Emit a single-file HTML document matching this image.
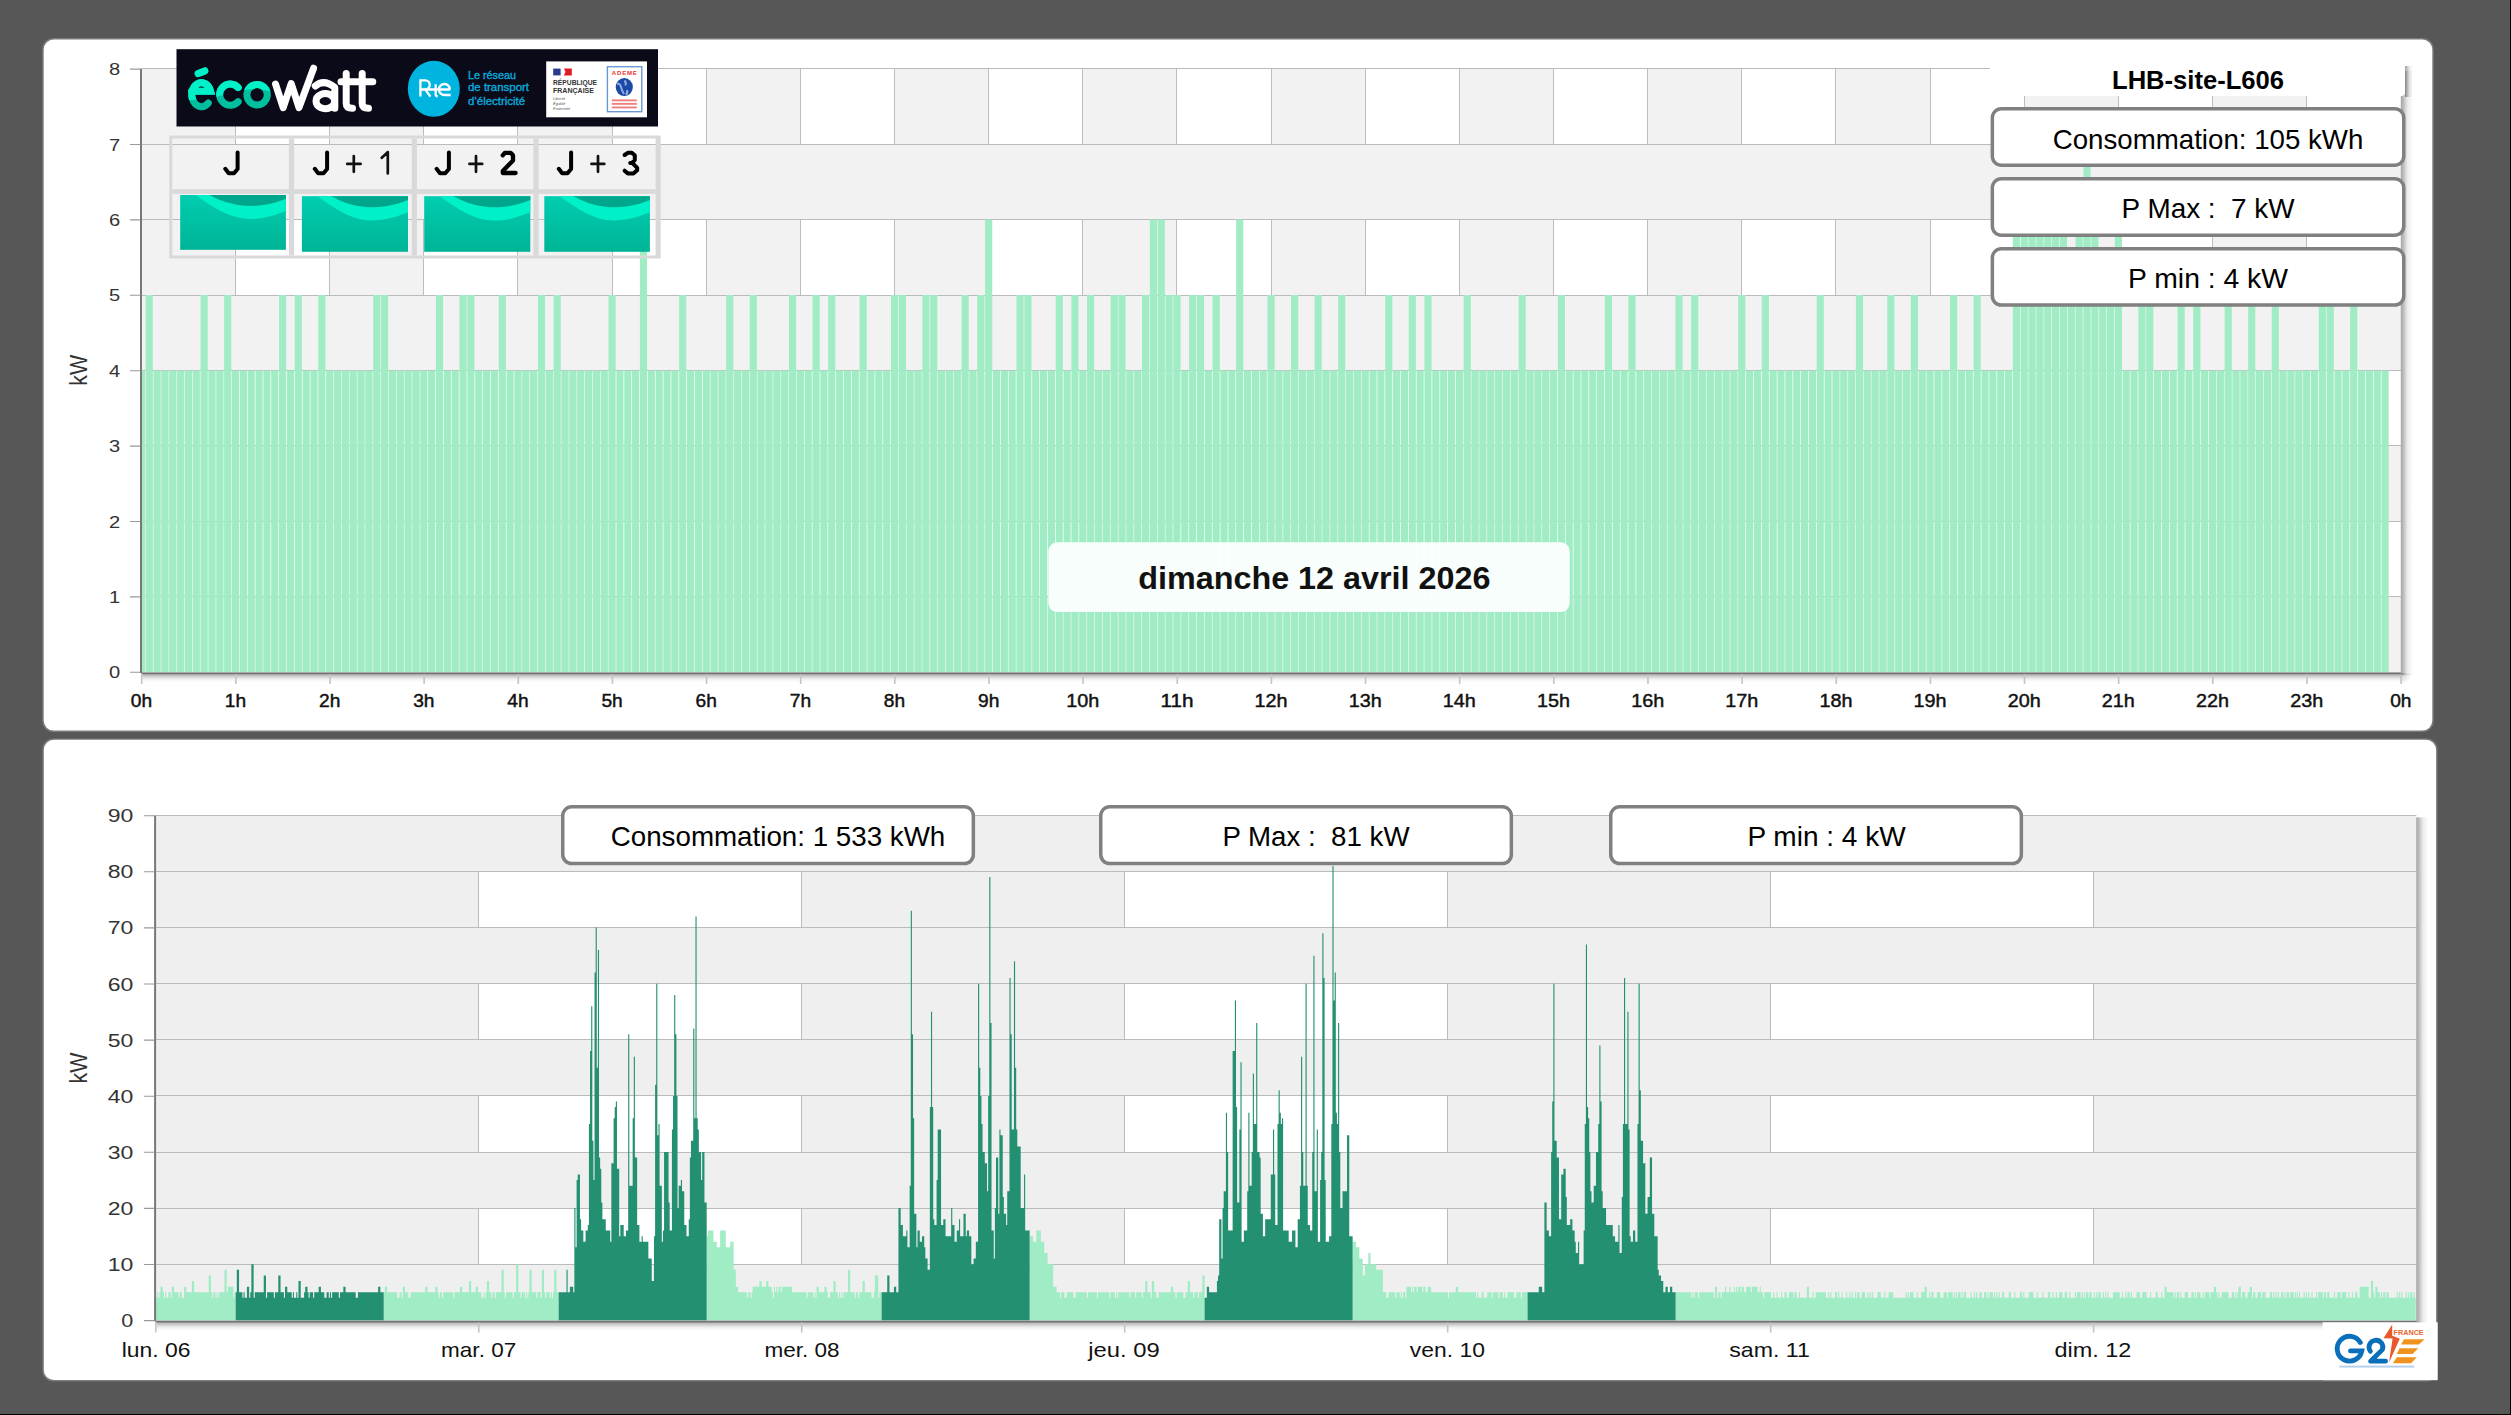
<!DOCTYPE html><html><head><meta charset="utf-8"><style>html,body{margin:0;padding:0;background:#575757;overflow:hidden}svg{display:block}text{font-family:"Liberation Sans",sans-serif;white-space:pre}</style></head><body><svg width="2511" height="1415" viewBox="0 0 2511 1415"><defs><linearGradient id="eg" x1="0" y1="0" x2="0" y2="1"><stop offset="0" stop-color="#00cdb0"/><stop offset="1" stop-color="#00b496"/></linearGradient><linearGradient id="shR" x1="0" y1="0" x2="1" y2="0"><stop offset="0" stop-opacity="0.36"/><stop offset="0.22" stop-opacity="0.26"/><stop offset="0.55" stop-opacity="0.08"/><stop offset="1" stop-opacity="0"/></linearGradient><linearGradient id="shB" x1="0" y1="0" x2="0" y2="1"><stop offset="0" stop-opacity="0.34"/><stop offset="0.3" stop-opacity="0.2"/><stop offset="0.65" stop-opacity="0.05"/><stop offset="1" stop-opacity="0"/></linearGradient><radialGradient id="shC" cx="0" cy="0" r="1"><stop offset="0" stop-opacity="0.3"/><stop offset="0.5" stop-opacity="0.08"/><stop offset="1" stop-opacity="0"/></radialGradient><linearGradient id="ecoG" gradientUnits="userSpaceOnUse" x1="0" y1="70" x2="0" y2="111"><stop offset="0.55" stop-color="#00eec8"/><stop offset="0.56" stop-color="#00bc9c"/></linearGradient><filter id="sh" x="-5%" y="-5%" width="115%" height="130%"><feGaussianBlur stdDeviation="2"/></filter></defs><rect x="0" y="0" width="2511" height="1415" fill="#575757"/><rect x="2510" y="0" width="1" height="1415" fill="#000"/><rect x="0" y="1414" width="2511" height="1" fill="#000"/><rect x="42.3" y="38.1" width="2391.4" height="693.9" rx="11" fill="#7a7a7a"/><rect x="42.4" y="738.4" width="2395.1" height="643" rx="11" fill="#7a7a7a"/><rect x="43.7" y="39.5" width="2388.6" height="691.1" rx="10" fill="#fff"/><rect x="43.8" y="739.8" width="2392.3" height="640.2" rx="10" fill="#fff"/><rect x="141.40" y="68.80" width="2259.40" height="603.20" fill="#fff"/><rect x="141.40" y="68.80" width="94.14" height="603.20" fill="#f2f2f2"/><rect x="329.68" y="68.80" width="94.14" height="603.20" fill="#f2f2f2"/><rect x="517.97" y="68.80" width="94.14" height="603.20" fill="#f2f2f2"/><rect x="706.25" y="68.80" width="94.14" height="603.20" fill="#f2f2f2"/><rect x="894.53" y="68.80" width="94.14" height="603.20" fill="#f2f2f2"/><rect x="1082.82" y="68.80" width="94.14" height="603.20" fill="#f2f2f2"/><rect x="1271.10" y="68.80" width="94.14" height="603.20" fill="#f2f2f2"/><rect x="1459.38" y="68.80" width="94.14" height="603.20" fill="#f2f2f2"/><rect x="1647.67" y="68.80" width="94.14" height="603.20" fill="#f2f2f2"/><rect x="1835.95" y="68.80" width="94.14" height="603.20" fill="#f2f2f2"/><rect x="2024.23" y="68.80" width="94.14" height="603.20" fill="#f2f2f2"/><rect x="2212.52" y="68.80" width="94.14" height="603.20" fill="#f2f2f2"/><line x1="235.50" y1="68.80" x2="235.50" y2="672.00" stroke="#bdbdbd" stroke-width="1"/><line x1="329.50" y1="68.80" x2="329.50" y2="672.00" stroke="#bdbdbd" stroke-width="1"/><line x1="423.50" y1="68.80" x2="423.50" y2="672.00" stroke="#bdbdbd" stroke-width="1"/><line x1="517.50" y1="68.80" x2="517.50" y2="672.00" stroke="#bdbdbd" stroke-width="1"/><line x1="612.50" y1="68.80" x2="612.50" y2="672.00" stroke="#bdbdbd" stroke-width="1"/><line x1="706.50" y1="68.80" x2="706.50" y2="672.00" stroke="#bdbdbd" stroke-width="1"/><line x1="800.50" y1="68.80" x2="800.50" y2="672.00" stroke="#bdbdbd" stroke-width="1"/><line x1="894.50" y1="68.80" x2="894.50" y2="672.00" stroke="#bdbdbd" stroke-width="1"/><line x1="988.50" y1="68.80" x2="988.50" y2="672.00" stroke="#bdbdbd" stroke-width="1"/><line x1="1082.50" y1="68.80" x2="1082.50" y2="672.00" stroke="#bdbdbd" stroke-width="1"/><line x1="1176.50" y1="68.80" x2="1176.50" y2="672.00" stroke="#bdbdbd" stroke-width="1"/><line x1="1271.50" y1="68.80" x2="1271.50" y2="672.00" stroke="#bdbdbd" stroke-width="1"/><line x1="1365.50" y1="68.80" x2="1365.50" y2="672.00" stroke="#bdbdbd" stroke-width="1"/><line x1="1459.50" y1="68.80" x2="1459.50" y2="672.00" stroke="#bdbdbd" stroke-width="1"/><line x1="1553.50" y1="68.80" x2="1553.50" y2="672.00" stroke="#bdbdbd" stroke-width="1"/><line x1="1647.50" y1="68.80" x2="1647.50" y2="672.00" stroke="#bdbdbd" stroke-width="1"/><line x1="1741.50" y1="68.80" x2="1741.50" y2="672.00" stroke="#bdbdbd" stroke-width="1"/><line x1="1835.50" y1="68.80" x2="1835.50" y2="672.00" stroke="#bdbdbd" stroke-width="1"/><line x1="1930.50" y1="68.80" x2="1930.50" y2="672.00" stroke="#bdbdbd" stroke-width="1"/><line x1="2024.50" y1="68.80" x2="2024.50" y2="672.00" stroke="#bdbdbd" stroke-width="1"/><line x1="2118.50" y1="68.80" x2="2118.50" y2="672.00" stroke="#bdbdbd" stroke-width="1"/><line x1="2212.50" y1="68.80" x2="2212.50" y2="672.00" stroke="#bdbdbd" stroke-width="1"/><line x1="2306.50" y1="68.80" x2="2306.50" y2="672.00" stroke="#bdbdbd" stroke-width="1"/><rect x="141.40" y="144.20" width="2259.40" height="75.40" fill="#f2f2f2"/><rect x="141.40" y="295.00" width="2259.40" height="75.40" fill="#f2f2f2"/><rect x="141.40" y="445.80" width="2259.40" height="75.40" fill="#f2f2f2"/><rect x="141.40" y="596.60" width="2259.40" height="75.40" fill="#f2f2f2"/><line x1="141.40" y1="672.50" x2="2400.80" y2="672.50" stroke="#bbb" stroke-width="1"/><line x1="141.40" y1="596.50" x2="2400.80" y2="596.50" stroke="#bbb" stroke-width="1"/><line x1="141.40" y1="521.50" x2="2400.80" y2="521.50" stroke="#bbb" stroke-width="1"/><line x1="141.40" y1="445.50" x2="2400.80" y2="445.50" stroke="#bbb" stroke-width="1"/><line x1="141.40" y1="370.50" x2="2400.80" y2="370.50" stroke="#bbb" stroke-width="1"/><line x1="141.40" y1="295.50" x2="2400.80" y2="295.50" stroke="#bbb" stroke-width="1"/><line x1="141.40" y1="219.50" x2="2400.80" y2="219.50" stroke="#bbb" stroke-width="1"/><line x1="141.40" y1="144.50" x2="2400.80" y2="144.50" stroke="#bbb" stroke-width="1"/><line x1="141.40" y1="68.50" x2="2400.80" y2="68.50" stroke="#bbb" stroke-width="1"/><rect x="2400.80" y="70.80" width="12" height="604.20" fill="url(#shR)"/><rect x="142.40" y="673.50" width="2259.40" height="9" fill="url(#shB)"/><radialGradient id="shC141" gradientUnits="userSpaceOnUse" cx="2400.80" cy="673.50" r="11"><stop offset="0" stop-opacity="0.32"/><stop offset="0.35" stop-opacity="0.14"/><stop offset="1" stop-opacity="0"/></radialGradient><rect x="2400.80" y="673.50" width="12" height="10" fill="url(#shC141)"/><path d="M141.40 370.40H144.97V672.00H141.40ZM145.67 295.00H152.82V672.00H145.67ZM153.52 370.40H160.66V672.00H153.52ZM161.36 370.40H168.51V672.00H161.36ZM169.21 370.40H176.35V672.00H169.21ZM177.05 370.40H184.20V672.00H177.05ZM184.90 370.40H192.04V672.00H184.90ZM192.74 370.40H199.89V672.00H192.74ZM200.59 295.00H207.73V672.00H200.59ZM208.43 370.40H215.58V672.00H208.43ZM216.28 370.40H223.42V672.00H216.28ZM224.12 295.00H231.27V672.00H224.12ZM231.97 370.40H239.11V672.00H231.97ZM239.81 370.40H246.96V672.00H239.81ZM247.66 370.40H254.80V672.00H247.66ZM255.50 370.40H262.65V672.00H255.50ZM263.35 370.40H270.49V672.00H263.35ZM271.19 370.40H278.34V672.00H271.19ZM279.04 295.00H286.19V672.00H279.04ZM286.89 370.40H294.03V672.00H286.89ZM294.73 295.00H301.88V672.00H294.73ZM302.58 370.40H309.72V672.00H302.58ZM310.42 370.40H317.57V672.00H310.42ZM318.27 295.00H325.41V672.00H318.27ZM326.11 370.40H333.26V672.00H326.11ZM333.96 370.40H341.10V672.00H333.96ZM341.80 370.40H348.95V672.00H341.80ZM349.65 370.40H356.79V672.00H349.65ZM357.49 370.40H364.64V672.00H357.49ZM365.34 370.40H372.48V672.00H365.34ZM373.18 295.00H380.33V672.00H373.18ZM381.03 295.00H388.17V672.00H381.03ZM388.87 370.40H396.02V672.00H388.87ZM396.72 370.40H403.86V672.00H396.72ZM404.56 370.40H411.71V672.00H404.56ZM412.41 370.40H419.55V672.00H412.41ZM420.25 370.40H427.40V672.00H420.25ZM428.10 370.40H435.24V672.00H428.10ZM435.94 295.00H443.09V672.00H435.94ZM443.79 370.40H450.93V672.00H443.79ZM451.63 370.40H458.78V672.00H451.63ZM459.48 295.00H466.62V672.00H459.48ZM467.32 295.00H474.47V672.00H467.32ZM475.17 370.40H482.31V672.00H475.17ZM483.01 370.40H490.16V672.00H483.01ZM490.86 370.40H498.00V672.00H490.86ZM498.70 295.00H505.85V672.00H498.70ZM506.55 370.40H513.69V672.00H506.55ZM514.39 370.40H521.54V672.00H514.39ZM522.24 370.40H529.38V672.00H522.24ZM530.08 370.40H537.23V672.00H530.08ZM537.93 295.00H545.07V672.00H537.93ZM545.77 370.40H552.92V672.00H545.77ZM553.62 295.00H560.76V672.00H553.62ZM561.46 370.40H568.61V672.00H561.46ZM569.31 370.40H576.46V672.00H569.31ZM577.16 370.40H584.30V672.00H577.16ZM585.00 370.40H592.15V672.00H585.00ZM592.85 370.40H599.99V672.00H592.85ZM600.69 370.40H607.84V672.00H600.69ZM608.54 295.00H615.68V672.00H608.54ZM616.38 370.40H623.53V672.00H616.38ZM624.23 370.40H631.37V672.00H624.23ZM632.07 370.40H639.22V672.00H632.07ZM639.92 219.60H647.06V672.00H639.92ZM647.76 370.40H654.91V672.00H647.76ZM655.61 370.40H662.75V672.00H655.61ZM663.45 370.40H670.60V672.00H663.45ZM671.30 370.40H678.44V672.00H671.30ZM679.14 295.00H686.29V672.00H679.14ZM686.99 370.40H694.13V672.00H686.99ZM694.83 370.40H701.98V672.00H694.83ZM702.68 370.40H709.82V672.00H702.68ZM710.52 370.40H717.67V672.00H710.52ZM718.37 370.40H725.51V672.00H718.37ZM726.21 295.00H733.36V672.00H726.21ZM734.06 370.40H741.20V672.00H734.06ZM741.90 370.40H749.05V672.00H741.90ZM749.75 295.00H756.89V672.00H749.75ZM757.59 370.40H764.74V672.00H757.59ZM765.44 370.40H772.58V672.00H765.44ZM773.28 370.40H780.43V672.00H773.28ZM781.13 370.40H788.27V672.00H781.13ZM788.97 295.00H796.12V672.00H788.97ZM796.82 370.40H803.96V672.00H796.82ZM804.66 370.40H811.81V672.00H804.66ZM812.51 295.00H819.65V672.00H812.51ZM820.35 370.40H827.50V672.00H820.35ZM828.20 295.00H835.34V672.00H828.20ZM836.04 370.40H843.19V672.00H836.04ZM843.89 370.40H851.04V672.00H843.89ZM851.74 370.40H858.88V672.00H851.74ZM859.58 295.00H866.73V672.00H859.58ZM867.43 370.40H874.57V672.00H867.43ZM875.27 370.40H882.42V672.00H875.27ZM883.12 370.40H890.26V672.00H883.12ZM890.96 295.00H898.11V672.00H890.96ZM898.81 295.00H905.95V672.00H898.81ZM906.65 370.40H913.80V672.00H906.65ZM914.50 370.40H921.64V672.00H914.50ZM922.34 295.00H929.49V672.00H922.34ZM930.19 295.00H937.33V672.00H930.19ZM938.03 370.40H945.18V672.00H938.03ZM945.88 370.40H953.02V672.00H945.88ZM953.72 370.40H960.87V672.00H953.72ZM961.57 295.00H968.71V672.00H961.57ZM969.41 370.40H976.56V672.00H969.41ZM977.26 295.00H984.40V672.00H977.26ZM985.10 219.60H992.25V672.00H985.10ZM992.95 370.40H1000.09V672.00H992.95ZM1000.79 370.40H1007.94V672.00H1000.79ZM1008.64 370.40H1015.78V672.00H1008.64ZM1016.48 295.00H1023.63V672.00H1016.48ZM1024.33 295.00H1031.47V672.00H1024.33ZM1032.17 370.40H1039.32V672.00H1032.17ZM1040.02 370.40H1047.16V672.00H1040.02ZM1047.86 370.40H1055.01V672.00H1047.86ZM1055.71 295.00H1062.85V672.00H1055.71ZM1063.55 370.40H1070.70V672.00H1063.55ZM1071.40 295.00H1078.54V672.00H1071.40ZM1079.24 370.40H1086.39V672.00H1079.24ZM1087.09 295.00H1094.23V672.00H1087.09ZM1094.93 370.40H1102.08V672.00H1094.93ZM1102.78 370.40H1109.92V672.00H1102.78ZM1110.62 295.00H1117.77V672.00H1110.62ZM1118.47 295.00H1125.61V672.00H1118.47ZM1126.31 370.40H1133.46V672.00H1126.31ZM1134.16 370.40H1141.31V672.00H1134.16ZM1142.01 295.00H1149.15V672.00H1142.01ZM1149.85 219.60H1157.00V672.00H1149.85ZM1157.70 219.60H1164.84V672.00H1157.70ZM1165.54 295.00H1172.69V672.00H1165.54ZM1173.39 295.00H1180.53V672.00H1173.39ZM1181.23 370.40H1188.38V672.00H1181.23ZM1189.08 295.00H1196.22V672.00H1189.08ZM1196.92 295.00H1204.07V672.00H1196.92ZM1204.77 370.40H1211.91V672.00H1204.77ZM1212.61 295.00H1219.76V672.00H1212.61ZM1220.46 370.40H1227.60V672.00H1220.46ZM1228.30 370.40H1235.45V672.00H1228.30ZM1236.15 219.60H1243.29V672.00H1236.15ZM1243.99 370.40H1251.14V672.00H1243.99ZM1251.84 370.40H1258.98V672.00H1251.84ZM1259.68 370.40H1266.83V672.00H1259.68ZM1267.53 295.00H1274.67V672.00H1267.53ZM1275.37 370.40H1282.52V672.00H1275.37ZM1283.22 370.40H1290.36V672.00H1283.22ZM1291.06 295.00H1298.21V672.00H1291.06ZM1298.91 370.40H1306.05V672.00H1298.91ZM1306.75 370.40H1313.90V672.00H1306.75ZM1314.60 295.00H1321.74V672.00H1314.60ZM1322.44 370.40H1329.59V672.00H1322.44ZM1330.29 370.40H1337.43V672.00H1330.29ZM1338.13 295.00H1345.28V672.00H1338.13ZM1345.98 370.40H1353.12V672.00H1345.98ZM1353.82 370.40H1360.97V672.00H1353.82ZM1361.67 370.40H1368.81V672.00H1361.67ZM1369.51 370.40H1376.66V672.00H1369.51ZM1377.36 370.40H1384.50V672.00H1377.36ZM1385.20 295.00H1392.35V672.00H1385.20ZM1393.05 370.40H1400.19V672.00H1393.05ZM1400.89 370.40H1408.04V672.00H1400.89ZM1408.74 295.00H1415.89V672.00H1408.74ZM1416.59 370.40H1423.73V672.00H1416.59ZM1424.43 295.00H1431.58V672.00H1424.43ZM1432.28 370.40H1439.42V672.00H1432.28ZM1440.12 370.40H1447.27V672.00H1440.12ZM1447.97 370.40H1455.11V672.00H1447.97ZM1455.81 370.40H1462.96V672.00H1455.81ZM1463.66 295.00H1470.80V672.00H1463.66ZM1471.50 370.40H1478.65V672.00H1471.50ZM1479.35 370.40H1486.49V672.00H1479.35ZM1487.19 370.40H1494.34V672.00H1487.19ZM1495.04 370.40H1502.18V672.00H1495.04ZM1502.88 370.40H1510.03V672.00H1502.88ZM1510.73 370.40H1517.87V672.00H1510.73ZM1518.57 295.00H1525.72V672.00H1518.57ZM1526.42 370.40H1533.56V672.00H1526.42ZM1534.26 370.40H1541.41V672.00H1534.26ZM1542.11 370.40H1549.25V672.00H1542.11ZM1549.95 370.40H1557.10V672.00H1549.95ZM1557.80 295.00H1564.94V672.00H1557.80ZM1565.64 370.40H1572.79V672.00H1565.64ZM1573.49 370.40H1580.63V672.00H1573.49ZM1581.33 370.40H1588.48V672.00H1581.33ZM1589.18 370.40H1596.32V672.00H1589.18ZM1597.02 370.40H1604.17V672.00H1597.02ZM1604.87 295.00H1612.01V672.00H1604.87ZM1612.71 370.40H1619.86V672.00H1612.71ZM1620.56 370.40H1627.70V672.00H1620.56ZM1628.40 295.00H1635.55V672.00H1628.40ZM1636.25 370.40H1643.39V672.00H1636.25ZM1644.09 370.40H1651.24V672.00H1644.09ZM1651.94 370.40H1659.08V672.00H1651.94ZM1659.78 370.40H1666.93V672.00H1659.78ZM1667.63 370.40H1674.77V672.00H1667.63ZM1675.47 295.00H1682.62V672.00H1675.47ZM1683.32 370.40H1690.46V672.00H1683.32ZM1691.16 295.00H1698.31V672.00H1691.16ZM1699.01 370.40H1706.16V672.00H1699.01ZM1706.86 370.40H1714.00V672.00H1706.86ZM1714.70 370.40H1721.85V672.00H1714.70ZM1722.55 370.40H1729.69V672.00H1722.55ZM1730.39 370.40H1737.54V672.00H1730.39ZM1738.24 295.00H1745.38V672.00H1738.24ZM1746.08 370.40H1753.23V672.00H1746.08ZM1753.93 370.40H1761.07V672.00H1753.93ZM1761.77 295.00H1768.92V672.00H1761.77ZM1769.62 370.40H1776.76V672.00H1769.62ZM1777.46 370.40H1784.61V672.00H1777.46ZM1785.31 370.40H1792.45V672.00H1785.31ZM1793.15 370.40H1800.30V672.00H1793.15ZM1801.00 370.40H1808.14V672.00H1801.00ZM1808.84 370.40H1815.99V672.00H1808.84ZM1816.69 295.00H1823.83V672.00H1816.69ZM1824.53 370.40H1831.68V672.00H1824.53ZM1832.38 370.40H1839.52V672.00H1832.38ZM1840.22 370.40H1847.37V672.00H1840.22ZM1848.07 370.40H1855.21V672.00H1848.07ZM1855.91 295.00H1863.06V672.00H1855.91ZM1863.76 370.40H1870.90V672.00H1863.76ZM1871.60 370.40H1878.75V672.00H1871.60ZM1879.45 370.40H1886.59V672.00H1879.45ZM1887.29 295.00H1894.44V672.00H1887.29ZM1895.14 370.40H1902.28V672.00H1895.14ZM1902.98 370.40H1910.13V672.00H1902.98ZM1910.83 295.00H1917.97V672.00H1910.83ZM1918.67 370.40H1925.82V672.00H1918.67ZM1926.52 370.40H1933.66V672.00H1926.52ZM1934.36 370.40H1941.51V672.00H1934.36ZM1942.21 370.40H1949.35V672.00H1942.21ZM1950.05 295.00H1957.20V672.00H1950.05ZM1957.90 370.40H1965.04V672.00H1957.90ZM1965.74 370.40H1972.89V672.00H1965.74ZM1973.59 295.00H1980.74V672.00H1973.59ZM1981.44 370.40H1988.58V672.00H1981.44ZM1989.28 370.40H1996.43V672.00H1989.28ZM1997.13 370.40H2004.27V672.00H1997.13ZM2004.97 370.40H2012.12V672.00H2004.97ZM2012.82 219.60H2019.96V672.00H2012.82ZM2020.66 219.60H2027.81V672.00H2020.66ZM2028.51 219.60H2035.65V672.00H2028.51ZM2036.35 219.60H2043.50V672.00H2036.35ZM2044.20 219.60H2051.34V672.00H2044.20ZM2052.04 219.60H2059.19V672.00H2052.04ZM2059.89 219.60H2067.03V672.00H2059.89ZM2067.73 295.00H2074.88V672.00H2067.73ZM2075.58 219.60H2082.72V672.00H2075.58ZM2083.42 144.20H2090.57V672.00H2083.42ZM2091.27 219.60H2098.41V672.00H2091.27ZM2099.11 295.00H2106.26V672.00H2099.11ZM2106.96 295.00H2114.10V672.00H2106.96ZM2114.80 219.60H2121.95V672.00H2114.80ZM2122.65 370.40H2129.79V672.00H2122.65ZM2130.49 370.40H2137.64V672.00H2130.49ZM2138.34 295.00H2145.48V672.00H2138.34ZM2146.18 295.00H2153.33V672.00H2146.18ZM2154.03 370.40H2161.17V672.00H2154.03ZM2161.87 370.40H2169.02V672.00H2161.87ZM2169.72 370.40H2176.86V672.00H2169.72ZM2177.56 295.00H2184.71V672.00H2177.56ZM2185.41 370.40H2192.55V672.00H2185.41ZM2193.25 295.00H2200.40V672.00H2193.25ZM2201.10 370.40H2208.24V672.00H2201.10ZM2208.94 370.40H2216.09V672.00H2208.94ZM2216.79 370.40H2223.93V672.00H2216.79ZM2224.63 295.00H2231.78V672.00H2224.63ZM2232.48 370.40H2239.62V672.00H2232.48ZM2240.32 370.40H2247.47V672.00H2240.32ZM2248.17 295.00H2255.31V672.00H2248.17ZM2256.01 370.40H2263.16V672.00H2256.01ZM2263.86 370.40H2271.01V672.00H2263.86ZM2271.71 295.00H2278.85V672.00H2271.71ZM2279.55 370.40H2286.70V672.00H2279.55ZM2287.40 370.40H2294.54V672.00H2287.40ZM2295.24 370.40H2302.39V672.00H2295.24ZM2303.09 370.40H2310.23V672.00H2303.09ZM2310.93 370.40H2318.08V672.00H2310.93ZM2318.78 295.00H2325.92V672.00H2318.78ZM2326.62 295.00H2333.77V672.00H2326.62ZM2334.47 370.40H2341.61V672.00H2334.47ZM2342.31 370.40H2349.46V672.00H2342.31ZM2350.16 295.00H2357.30V672.00H2350.16ZM2358.00 370.40H2365.15V672.00H2358.00ZM2365.85 370.40H2372.99V672.00H2365.85ZM2373.69 370.40H2380.84V672.00H2373.69ZM2381.54 370.40H2388.68V672.00H2381.54Z" fill="#a0ecc4"/><line x1="141.00" y1="68.80" x2="141.00" y2="673.00" stroke="#777" stroke-width="2"/><line x1="141.40" y1="673.50" x2="2400.80" y2="673.50" stroke="#747474" stroke-width="1.4"/><path d="M130 672.30H140.40M130 596.90H140.40M130 521.50H140.40M130 446.10H140.40M130 370.70H140.40M130 295.30H140.40M130 219.90H140.40M130 144.50H140.40M130 69.10H140.40" stroke="#999" stroke-width="1.1" fill="none"/><path d="M141.70 674.20V684M235.84 674.20V684M329.98 674.20V684M424.13 674.20V684M518.27 674.20V684M612.41 674.20V684M706.55 674.20V684M800.69 674.20V684M894.83 674.20V684M988.98 674.20V684M1083.12 674.20V684M1177.26 674.20V684M1271.40 674.20V684M1365.54 674.20V684M1459.68 674.20V684M1553.83 674.20V684M1647.97 674.20V684M1742.11 674.20V684M1836.25 674.20V684M1930.39 674.20V684M2024.53 674.20V684M2118.68 674.20V684M2212.82 674.20V684M2306.96 674.20V684M2401.10 674.20V684" stroke="#c4c4c4" stroke-width="1.6" fill="none"/><text x="120.3" y="678.30" text-anchor="end" font-size="17" fill="#333" textLength="11.2" lengthAdjust="spacingAndGlyphs">0</text><text x="120.3" y="602.90" text-anchor="end" font-size="17" fill="#333" textLength="11.2" lengthAdjust="spacingAndGlyphs">1</text><text x="120.3" y="527.50" text-anchor="end" font-size="17" fill="#333" textLength="11.2" lengthAdjust="spacingAndGlyphs">2</text><text x="120.3" y="452.10" text-anchor="end" font-size="17" fill="#333" textLength="11.2" lengthAdjust="spacingAndGlyphs">3</text><text x="120.3" y="376.70" text-anchor="end" font-size="17" fill="#333" textLength="11.2" lengthAdjust="spacingAndGlyphs">4</text><text x="120.3" y="301.30" text-anchor="end" font-size="17" fill="#333" textLength="11.2" lengthAdjust="spacingAndGlyphs">5</text><text x="120.3" y="225.90" text-anchor="end" font-size="17" fill="#333" textLength="11.2" lengthAdjust="spacingAndGlyphs">6</text><text x="120.3" y="150.50" text-anchor="end" font-size="17" fill="#333" textLength="11.2" lengthAdjust="spacingAndGlyphs">7</text><text x="120.3" y="75.10" text-anchor="end" font-size="17" fill="#333" textLength="11.2" lengthAdjust="spacingAndGlyphs">8</text><text x="141.40" y="707" text-anchor="middle" font-size="18" fill="#111" stroke="#111" stroke-width="0.45" textLength="21.3" lengthAdjust="spacingAndGlyphs">0h</text><text x="235.54" y="707" text-anchor="middle" font-size="18" fill="#111" stroke="#111" stroke-width="0.45" textLength="21.3" lengthAdjust="spacingAndGlyphs">1h</text><text x="329.68" y="707" text-anchor="middle" font-size="18" fill="#111" stroke="#111" stroke-width="0.45" textLength="21.3" lengthAdjust="spacingAndGlyphs">2h</text><text x="423.83" y="707" text-anchor="middle" font-size="18" fill="#111" stroke="#111" stroke-width="0.45" textLength="21.3" lengthAdjust="spacingAndGlyphs">3h</text><text x="517.97" y="707" text-anchor="middle" font-size="18" fill="#111" stroke="#111" stroke-width="0.45" textLength="21.3" lengthAdjust="spacingAndGlyphs">4h</text><text x="612.11" y="707" text-anchor="middle" font-size="18" fill="#111" stroke="#111" stroke-width="0.45" textLength="21.3" lengthAdjust="spacingAndGlyphs">5h</text><text x="706.25" y="707" text-anchor="middle" font-size="18" fill="#111" stroke="#111" stroke-width="0.45" textLength="21.3" lengthAdjust="spacingAndGlyphs">6h</text><text x="800.39" y="707" text-anchor="middle" font-size="18" fill="#111" stroke="#111" stroke-width="0.45" textLength="21.3" lengthAdjust="spacingAndGlyphs">7h</text><text x="894.53" y="707" text-anchor="middle" font-size="18" fill="#111" stroke="#111" stroke-width="0.45" textLength="21.3" lengthAdjust="spacingAndGlyphs">8h</text><text x="988.68" y="707" text-anchor="middle" font-size="18" fill="#111" stroke="#111" stroke-width="0.45" textLength="21.3" lengthAdjust="spacingAndGlyphs">9h</text><text x="1082.82" y="707" text-anchor="middle" font-size="18" fill="#111" stroke="#111" stroke-width="0.45" textLength="33.0" lengthAdjust="spacingAndGlyphs">10h</text><text x="1176.96" y="707" text-anchor="middle" font-size="18" fill="#111" stroke="#111" stroke-width="0.45" textLength="33.0" lengthAdjust="spacingAndGlyphs">11h</text><text x="1271.10" y="707" text-anchor="middle" font-size="18" fill="#111" stroke="#111" stroke-width="0.45" textLength="33.0" lengthAdjust="spacingAndGlyphs">12h</text><text x="1365.24" y="707" text-anchor="middle" font-size="18" fill="#111" stroke="#111" stroke-width="0.45" textLength="33.0" lengthAdjust="spacingAndGlyphs">13h</text><text x="1459.38" y="707" text-anchor="middle" font-size="18" fill="#111" stroke="#111" stroke-width="0.45" textLength="33.0" lengthAdjust="spacingAndGlyphs">14h</text><text x="1553.53" y="707" text-anchor="middle" font-size="18" fill="#111" stroke="#111" stroke-width="0.45" textLength="33.0" lengthAdjust="spacingAndGlyphs">15h</text><text x="1647.67" y="707" text-anchor="middle" font-size="18" fill="#111" stroke="#111" stroke-width="0.45" textLength="33.0" lengthAdjust="spacingAndGlyphs">16h</text><text x="1741.81" y="707" text-anchor="middle" font-size="18" fill="#111" stroke="#111" stroke-width="0.45" textLength="33.0" lengthAdjust="spacingAndGlyphs">17h</text><text x="1835.95" y="707" text-anchor="middle" font-size="18" fill="#111" stroke="#111" stroke-width="0.45" textLength="33.0" lengthAdjust="spacingAndGlyphs">18h</text><text x="1930.09" y="707" text-anchor="middle" font-size="18" fill="#111" stroke="#111" stroke-width="0.45" textLength="33.0" lengthAdjust="spacingAndGlyphs">19h</text><text x="2024.23" y="707" text-anchor="middle" font-size="18" fill="#111" stroke="#111" stroke-width="0.45" textLength="33.0" lengthAdjust="spacingAndGlyphs">20h</text><text x="2118.38" y="707" text-anchor="middle" font-size="18" fill="#111" stroke="#111" stroke-width="0.45" textLength="33.0" lengthAdjust="spacingAndGlyphs">21h</text><text x="2212.52" y="707" text-anchor="middle" font-size="18" fill="#111" stroke="#111" stroke-width="0.45" textLength="33.0" lengthAdjust="spacingAndGlyphs">22h</text><text x="2306.66" y="707" text-anchor="middle" font-size="18" fill="#111" stroke="#111" stroke-width="0.45" textLength="33.0" lengthAdjust="spacingAndGlyphs">23h</text><text x="2400.80" y="707" text-anchor="middle" font-size="18" fill="#111" stroke="#111" stroke-width="0.45" textLength="21.3" lengthAdjust="spacingAndGlyphs">0h</text><text transform="translate(86.6 370.2) rotate(-90)" text-anchor="middle" font-size="23.5" fill="#333" textLength="31" lengthAdjust="spacingAndGlyphs">kW</text><rect x="155.50" y="815.40" width="2260.80" height="504.90" fill="#fff"/><rect x="155.50" y="815.40" width="322.97" height="504.90" fill="#efefef"/><rect x="801.44" y="815.40" width="322.97" height="504.90" fill="#efefef"/><rect x="1447.39" y="815.40" width="322.97" height="504.90" fill="#efefef"/><rect x="2093.33" y="815.40" width="322.97" height="504.90" fill="#efefef"/><line x1="478.50" y1="815.40" x2="478.50" y2="1320.30" stroke="#bbb" stroke-width="1"/><line x1="801.50" y1="815.40" x2="801.50" y2="1320.30" stroke="#bbb" stroke-width="1"/><line x1="1124.50" y1="815.40" x2="1124.50" y2="1320.30" stroke="#bbb" stroke-width="1"/><line x1="1447.50" y1="815.40" x2="1447.50" y2="1320.30" stroke="#bbb" stroke-width="1"/><line x1="1770.50" y1="815.40" x2="1770.50" y2="1320.30" stroke="#bbb" stroke-width="1"/><line x1="2093.50" y1="815.40" x2="2093.50" y2="1320.30" stroke="#bbb" stroke-width="1"/><rect x="155.50" y="815.40" width="2260.80" height="56.10" fill="#efefef"/><rect x="155.50" y="927.60" width="2260.80" height="56.10" fill="#efefef"/><rect x="155.50" y="1039.80" width="2260.80" height="56.10" fill="#efefef"/><rect x="155.50" y="1152.00" width="2260.80" height="56.10" fill="#efefef"/><rect x="155.50" y="1264.20" width="2260.80" height="56.10" fill="#efefef"/><line x1="155.50" y1="1320.50" x2="2416.30" y2="1320.50" stroke="#bbb" stroke-width="1"/><line x1="155.50" y1="1264.50" x2="2416.30" y2="1264.50" stroke="#bbb" stroke-width="1"/><line x1="155.50" y1="1208.50" x2="2416.30" y2="1208.50" stroke="#bbb" stroke-width="1"/><line x1="155.50" y1="1152.50" x2="2416.30" y2="1152.50" stroke="#bbb" stroke-width="1"/><line x1="155.50" y1="1095.50" x2="2416.30" y2="1095.50" stroke="#bbb" stroke-width="1"/><line x1="155.50" y1="1039.50" x2="2416.30" y2="1039.50" stroke="#bbb" stroke-width="1"/><line x1="155.50" y1="983.50" x2="2416.30" y2="983.50" stroke="#bbb" stroke-width="1"/><line x1="155.50" y1="927.50" x2="2416.30" y2="927.50" stroke="#bbb" stroke-width="1"/><line x1="155.50" y1="871.50" x2="2416.30" y2="871.50" stroke="#bbb" stroke-width="1"/><line x1="155.50" y1="815.50" x2="2416.30" y2="815.50" stroke="#bbb" stroke-width="1"/><rect x="2416.30" y="817.40" width="12" height="505.90" fill="url(#shR)"/><rect x="156.50" y="1321.80" width="2260.80" height="9" fill="url(#shB)"/><radialGradient id="shC155" gradientUnits="userSpaceOnUse" cx="2416.30" cy="1321.80" r="11"><stop offset="0" stop-opacity="0.32"/><stop offset="0.35" stop-opacity="0.14"/><stop offset="1" stop-opacity="0"/></radialGradient><rect x="2416.30" y="1321.80" width="12" height="10" fill="url(#shC155)"/><path d="M155.50 1320.30V1292.25H156.06V1297.86H157.18V1292.25H158.30V1297.86H159.43V1292.25H160.55V1286.64H161.67V1286.64H162.79V1292.25H163.91V1297.86H165.03V1292.25H166.15V1297.86H167.28V1297.86H168.40V1292.25H169.52V1292.25H170.64V1297.86H171.76V1286.64H172.88V1286.64H174.00V1292.25H175.12V1292.25H176.25V1292.25H177.37V1292.25H178.49V1297.86H179.61V1292.25H180.73V1292.25H181.85V1297.86H182.97V1297.86H184.10V1286.64H185.22V1286.64H186.34V1292.25H187.46V1292.25H188.58V1292.25H189.70V1292.25H190.82V1292.25H191.95V1281.03H193.07V1281.03H194.19V1292.25H195.31V1292.25H196.43V1292.25H197.55V1292.25H198.67V1292.25H199.80V1292.25H200.92V1292.25H202.04V1292.25H203.16V1292.25H204.28V1292.25H205.40V1292.25H206.53V1292.25H207.65V1292.25H208.77V1275.42H209.89V1275.42H211.01V1292.25H212.13V1297.86H213.25V1292.25H214.38V1292.25H215.50V1297.86H216.62V1292.25H217.74V1297.86H218.86V1292.25H219.98V1292.25H221.10V1292.25H222.22V1292.25H223.35V1292.25H224.47V1269.81H225.59V1269.81H226.71V1292.25H227.83V1286.64H228.95V1286.64H230.08V1286.64H231.20V1286.64H232.32V1286.64H233.44V1297.86H234.56V1292.25H235.68V1320.30ZM383.71 1320.30V1292.25H384.83V1286.64H385.95V1286.64H387.08V1292.25H388.20V1292.25H389.32V1292.25H390.44V1292.25H391.56V1292.25H392.68V1292.25H393.80V1292.25H394.93V1292.25H396.05V1292.25H397.17V1297.86H398.29V1297.86H399.41V1292.25H400.53V1292.25H401.65V1297.86H402.78V1286.64H403.90V1286.64H405.02V1292.25H406.14V1292.25H407.26V1292.25H408.38V1297.86H409.50V1297.86H410.62V1292.25H411.75V1292.25H412.87V1292.25H413.99V1292.25H415.11V1292.25H416.23V1292.25H417.35V1292.25H418.48V1292.25H419.60V1292.25H420.72V1292.25H421.84V1292.25H422.96V1292.25H424.08V1292.25H425.20V1286.64H426.33V1286.64H427.45V1292.25H428.57V1292.25H429.69V1292.25H430.81V1292.25H431.93V1292.25H433.05V1292.25H434.18V1292.25H435.30V1286.64H436.42V1286.64H437.54V1292.25H438.66V1297.86H439.78V1292.25H440.90V1292.25H442.03V1297.86H443.15V1292.25H444.27V1292.25H445.39V1292.25H446.51V1292.25H447.63V1292.25H448.75V1292.25H449.88V1292.25H451.00V1292.25H452.12V1292.25H453.24V1297.86H454.36V1292.25H455.48V1292.25H456.60V1292.25H457.73V1292.25H458.85V1292.25H459.97V1286.64H461.09V1286.64H462.21V1292.25H463.33V1292.25H464.45V1292.25H465.58V1292.25H466.70V1292.25H467.82V1292.25H468.94V1281.03H470.06V1281.03H471.18V1292.25H472.30V1292.25H473.43V1292.25H474.55V1292.25H475.67V1286.64H476.79V1286.64H477.91V1292.25H479.03V1292.25H480.15V1292.25H481.28V1297.86H482.40V1297.86H483.52V1292.25H484.64V1297.86H485.76V1292.25H486.88V1281.03H488.00V1281.03H489.13V1292.25H490.25V1292.25H491.37V1297.86H492.49V1292.25H493.61V1292.25H494.73V1297.86H495.85V1292.25H496.98V1292.25H498.10V1292.25H499.22V1292.25H500.34V1292.25H501.46V1269.81H502.58V1269.81H503.70V1292.25H504.83V1297.86H505.95V1292.25H507.07V1292.25H508.19V1292.25H509.31V1292.25H510.43V1292.25H511.55V1292.25H512.68V1297.86H513.80V1292.25H514.92V1292.25H516.04V1264.20H517.16V1264.20H518.28V1292.25H519.40V1292.25H520.53V1297.86H521.65V1292.25H522.77V1292.25H523.89V1292.25H525.01V1297.86H526.13V1292.25H527.25V1297.86H528.38V1292.25H529.50V1269.81H530.62V1269.81H531.74V1292.25H532.86V1292.25H533.98V1292.25H535.10V1292.25H536.23V1297.86H537.35V1292.25H538.47V1292.25H539.59V1292.25H540.71V1297.86H541.83V1269.81H542.95V1269.81H544.08V1292.25H545.20V1297.86H546.32V1292.25H547.44V1292.25H548.56V1292.25H549.68V1297.86H550.80V1292.25H551.93V1297.86H553.05V1292.25H554.17V1269.81H555.29V1269.81H556.41V1292.25H557.53V1292.25H558.65V1320.30ZM706.68 1320.30V1236.15H707.80V1230.54H708.93V1230.54H710.05V1230.54H711.17V1230.54H712.29V1230.54H713.41V1241.76H714.53V1241.76H715.65V1241.76H716.78V1247.37H717.90V1247.37H719.02V1247.37H720.14V1230.54H721.26V1230.54H722.38V1230.54H723.50V1230.54H724.62V1230.54H725.75V1247.37H726.87V1247.37H727.99V1247.37H729.11V1247.37H730.23V1241.76H731.35V1241.76H732.48V1241.76H733.60V1269.81H734.72V1269.81H735.84V1286.64H736.96V1286.64H738.08V1292.25H739.20V1292.25H740.33V1292.25H741.45V1292.25H742.57V1292.25H743.69V1292.25H744.81V1292.25H745.93V1292.25H747.05V1297.86H748.18V1292.25H749.30V1292.25H750.42V1297.86H751.54V1292.25H752.66V1286.64H753.78V1286.64H754.90V1286.64H756.03V1286.64H757.15V1286.64H758.27V1286.64H759.39V1281.03H760.51V1281.03H761.63V1286.64H762.75V1286.64H763.88V1286.64H765.00V1286.64H766.12V1281.03H767.24V1281.03H768.36V1286.64H769.48V1286.64H770.60V1286.64H771.73V1292.25H772.85V1297.86H773.97V1286.64H775.09V1292.25H776.21V1286.64H777.33V1292.25H778.45V1286.64H779.58V1286.64H780.70V1292.25H781.82V1286.64H782.94V1286.64H784.06V1286.64H785.18V1286.64H786.30V1286.64H787.43V1286.64H788.55V1286.64H789.67V1286.64H790.79V1286.64H791.91V1292.25H793.03V1292.25H794.15V1292.25H795.28V1292.25H796.40V1292.25H797.52V1292.25H798.64V1292.25H799.76V1292.25H800.88V1292.25H802.00V1292.25H803.13V1292.25H804.25V1292.25H805.37V1292.25H806.49V1297.86H807.61V1292.25H808.73V1292.25H809.85V1292.25H810.98V1292.25H812.10V1292.25H813.22V1297.86H814.34V1292.25H815.46V1297.86H816.58V1286.64H817.70V1286.64H818.83V1292.25H819.95V1292.25H821.07V1292.25H822.19V1292.25H823.31V1292.25H824.43V1286.64H825.55V1286.64H826.68V1292.25H827.80V1297.86H828.92V1297.86H830.04V1292.25H831.16V1292.25H832.28V1292.25H833.40V1281.03H834.53V1281.03H835.65V1292.25H836.77V1292.25H837.89V1297.86H839.01V1292.25H840.13V1297.86H841.25V1292.25H842.38V1297.86H843.50V1292.25H844.62V1292.25H845.74V1292.25H846.86V1292.25H847.98V1269.81H849.10V1269.81H850.23V1292.25H851.35V1292.25H852.47V1292.25H853.59V1292.25H854.71V1297.86H855.83V1292.25H856.95V1292.25H858.08V1297.86H859.20V1292.25H860.32V1292.25H861.44V1292.25H862.56V1281.03H863.68V1281.03H864.80V1292.25H865.93V1292.25H867.05V1292.25H868.17V1292.25H869.29V1292.25H870.41V1292.25H871.53V1297.86H872.65V1297.86H873.78V1292.25H874.90V1275.42H876.02V1275.42H877.14V1275.42H878.26V1297.86H879.38V1292.25H880.50V1292.25H881.62V1320.30ZM1029.65 1320.30V1236.15H1030.78V1236.15H1031.90V1236.15H1033.02V1241.76H1034.14V1241.76H1035.26V1241.76H1036.38V1230.54H1037.50V1230.54H1038.62V1230.54H1039.75V1230.54H1040.87V1241.76H1041.99V1241.76H1043.11V1241.76H1044.23V1252.98H1045.35V1252.98H1046.48V1252.98H1047.60V1264.20H1048.72V1264.20H1049.84V1264.20H1050.96V1264.20H1052.08V1264.20H1053.20V1286.64H1054.33V1286.64H1055.45V1286.64H1056.57V1292.25H1057.69V1292.25H1058.81V1292.25H1059.93V1297.86H1061.05V1292.25H1062.18V1292.25H1063.30V1292.25H1064.42V1297.86H1065.54V1297.86H1066.66V1292.25H1067.78V1292.25H1068.90V1292.25H1070.03V1292.25H1071.15V1292.25H1072.27V1292.25H1073.39V1297.86H1074.51V1297.86H1075.63V1292.25H1076.75V1292.25H1077.88V1292.25H1079.00V1292.25H1080.12V1292.25H1081.24V1292.25H1082.36V1292.25H1083.48V1292.25H1084.60V1292.25H1085.73V1292.25H1086.85V1297.86H1087.97V1292.25H1089.09V1292.25H1090.21V1292.25H1091.33V1292.25H1092.45V1292.25H1093.58V1292.25H1094.70V1292.25H1095.82V1292.25H1096.94V1297.86H1098.06V1292.25H1099.18V1292.25H1100.30V1292.25H1101.43V1292.25H1102.55V1292.25H1103.67V1292.25H1104.79V1292.25H1105.91V1292.25H1107.03V1292.25H1108.15V1292.25H1109.28V1297.86H1110.40V1292.25H1111.52V1292.25H1112.64V1292.25H1113.76V1292.25H1114.88V1297.86H1116.00V1292.25H1117.12V1297.86H1118.25V1292.25H1119.37V1292.25H1120.49V1292.25H1121.61V1292.25H1122.73V1292.25H1123.85V1292.25H1124.98V1292.25H1126.10V1292.25H1127.22V1292.25H1128.34V1292.25H1129.46V1297.86H1130.58V1292.25H1131.70V1292.25H1132.83V1292.25H1133.95V1292.25H1135.07V1297.86H1136.19V1292.25H1137.31V1292.25H1138.43V1292.25H1139.55V1292.25H1140.68V1292.25H1141.80V1297.86H1142.92V1292.25H1144.04V1292.25H1145.16V1281.03H1146.28V1281.03H1147.40V1292.25H1148.53V1292.25H1149.65V1292.25H1150.77V1297.86H1151.89V1281.03H1153.01V1281.03H1154.13V1292.25H1155.25V1292.25H1156.38V1297.86H1157.50V1297.86H1158.62V1292.25H1159.74V1292.25H1160.86V1292.25H1161.98V1292.25H1163.10V1292.25H1164.23V1292.25H1165.35V1292.25H1166.47V1292.25H1167.59V1292.25H1168.71V1292.25H1169.83V1292.25H1170.95V1286.64H1172.08V1286.64H1173.20V1292.25H1174.32V1292.25H1175.44V1297.86H1176.56V1292.25H1177.68V1292.25H1178.80V1292.25H1179.93V1292.25H1181.05V1292.25H1182.17V1292.25H1183.29V1297.86H1184.41V1297.86H1185.53V1292.25H1186.65V1292.25H1187.78V1281.03H1188.90V1281.03H1190.02V1292.25H1191.14V1292.25H1192.26V1292.25H1193.38V1297.86H1194.50V1292.25H1195.63V1292.25H1196.75V1292.25H1197.87V1297.86H1198.99V1292.25H1200.11V1292.25H1201.23V1292.25H1202.35V1275.42H1203.48V1275.42H1204.60V1320.30ZM1352.62 1320.30V1241.76H1353.75V1241.76H1354.87V1241.76H1355.99V1247.37H1357.11V1247.37H1358.23V1247.37H1359.35V1258.59H1360.48V1258.59H1361.60V1258.59H1362.72V1275.42H1363.84V1275.42H1364.96V1264.20H1366.08V1264.20H1367.20V1264.20H1368.33V1252.98H1369.45V1252.98H1370.57V1264.20H1371.69V1264.20H1372.81V1264.20H1373.93V1264.20H1375.05V1264.20H1376.18V1269.81H1377.30V1269.81H1378.42V1269.81H1379.54V1269.81H1380.66V1269.81H1381.78V1269.81H1382.90V1292.25H1384.03V1292.25H1385.15V1292.25H1386.27V1297.86H1387.39V1297.86H1388.51V1292.25H1389.63V1292.25H1390.75V1292.25H1391.88V1292.25H1393.00V1292.25H1394.12V1292.25H1395.24V1297.86H1396.36V1292.25H1397.48V1292.25H1398.60V1292.25H1399.73V1297.86H1400.85V1292.25H1401.97V1297.86H1403.09V1292.25H1404.21V1292.25H1405.33V1297.86H1406.45V1286.64H1407.58V1286.64H1408.70V1286.64H1409.82V1286.64H1410.94V1292.25H1412.06V1286.64H1413.18V1292.25H1414.30V1286.64H1415.43V1286.64H1416.55V1292.25H1417.67V1286.64H1418.79V1286.64H1419.91V1286.64H1421.03V1286.64H1422.15V1292.25H1423.28V1286.64H1424.40V1286.64H1425.52V1292.25H1426.64V1292.25H1427.76V1286.64H1428.88V1286.64H1430.00V1286.64H1431.12V1292.25H1432.25V1292.25H1433.37V1292.25H1434.49V1292.25H1435.61V1292.25H1436.73V1292.25H1437.85V1292.25H1438.98V1292.25H1440.10V1292.25H1441.22V1292.25H1442.34V1292.25H1443.46V1292.25H1444.58V1292.25H1445.70V1292.25H1446.83V1292.25H1447.95V1297.86H1449.07V1292.25H1450.19V1292.25H1451.31V1292.25H1452.43V1292.25H1453.55V1292.25H1454.68V1292.25H1455.80V1286.64H1456.92V1286.64H1458.04V1292.25H1459.16V1292.25H1460.28V1292.25H1461.40V1292.25H1462.53V1292.25H1463.65V1292.25H1464.77V1292.25H1465.89V1292.25H1467.01V1292.25H1468.13V1292.25H1469.25V1292.25H1470.38V1292.25H1471.50V1292.25H1472.62V1292.25H1473.74V1292.25H1474.86V1292.25H1475.98V1297.86H1477.10V1292.25H1478.23V1297.86H1479.35V1297.86H1480.47V1297.86H1481.59V1292.25H1482.71V1292.25H1483.83V1297.86H1484.95V1297.86H1486.08V1297.86H1487.20V1292.25H1488.32V1292.25H1489.44V1292.25H1490.56V1292.25H1491.68V1297.86H1492.80V1292.25H1493.93V1292.25H1495.05V1292.25H1496.17V1292.25H1497.29V1292.25H1498.41V1297.86H1499.53V1292.25H1500.65V1292.25H1501.78V1292.25H1502.90V1297.86H1504.02V1292.25H1505.14V1297.86H1506.26V1297.86H1507.38V1292.25H1508.50V1292.25H1509.62V1292.25H1510.75V1292.25H1511.87V1292.25H1512.99V1292.25H1514.11V1297.86H1515.23V1297.86H1516.35V1292.25H1517.48V1292.25H1518.60V1292.25H1519.72V1292.25H1520.84V1297.86H1521.96V1292.25H1523.08V1292.25H1524.20V1292.25H1525.33V1292.25H1526.45V1292.25H1527.57V1320.30ZM1675.60 1320.30V1292.25H1676.72V1292.25H1677.84V1292.25H1678.96V1292.25H1680.08V1292.25H1681.20V1292.25H1682.33V1292.25H1683.45V1292.25H1684.57V1292.25H1685.69V1292.25H1686.81V1292.25H1687.93V1292.25H1689.05V1292.25H1690.18V1292.25H1691.30V1297.86H1692.42V1292.25H1693.54V1297.86H1694.66V1292.25H1695.78V1292.25H1696.90V1292.25H1698.03V1297.86H1699.15V1292.25H1700.27V1292.25H1701.39V1292.25H1702.51V1292.25H1703.63V1292.25H1704.75V1292.25H1705.88V1292.25H1707.00V1292.25H1708.12V1292.25H1709.24V1292.25H1710.36V1292.25H1711.48V1292.25H1712.60V1292.25H1713.73V1297.86H1714.85V1286.64H1715.97V1286.64H1717.09V1297.86H1718.21V1292.25H1719.33V1292.25H1720.45V1297.86H1721.58V1292.25H1722.70V1292.25H1723.82V1292.25H1724.94V1286.64H1726.06V1292.25H1727.18V1292.25H1728.30V1292.25H1729.43V1286.64H1730.55V1292.25H1731.67V1292.25H1732.79V1292.25H1733.91V1286.64H1735.03V1292.25H1736.15V1286.64H1737.28V1292.25H1738.40V1286.64H1739.52V1286.64H1740.64V1292.25H1741.76V1286.64H1742.88V1286.64H1744.00V1292.25H1745.12V1292.25H1746.25V1286.64H1747.37V1286.64H1748.49V1286.64H1749.61V1286.64H1750.73V1292.25H1751.85V1286.64H1752.98V1286.64H1754.10V1286.64H1755.22V1286.64H1756.34V1286.64H1757.46V1292.25H1758.58V1292.25H1759.70V1286.64H1760.83V1292.25H1761.95V1292.25H1763.07V1297.86H1764.19V1292.25H1765.31V1292.25H1766.43V1292.25H1767.55V1292.25H1768.68V1292.25H1769.80V1292.25H1770.92V1297.86H1772.04V1297.86H1773.16V1292.25H1774.28V1297.86H1775.40V1297.86H1776.53V1292.25H1777.65V1297.86H1778.77V1297.86H1779.89V1297.86H1781.01V1292.25H1782.13V1297.86H1783.25V1297.86H1784.38V1292.25H1785.50V1292.25H1786.62V1297.86H1787.74V1297.86H1788.86V1292.25H1789.98V1292.25H1791.10V1292.25H1792.23V1292.25H1793.35V1297.86H1794.47V1292.25H1795.59V1292.25H1796.71V1297.86H1797.83V1297.86H1798.95V1292.25H1800.08V1297.86H1801.20V1297.86H1802.32V1297.86H1803.44V1297.86H1804.56V1297.86H1805.68V1297.86H1806.80V1286.64H1807.92V1286.64H1809.05V1297.86H1810.17V1297.86H1811.29V1297.86H1812.41V1292.25H1813.53V1297.86H1814.65V1297.86H1815.78V1292.25H1816.90V1292.25H1818.02V1292.25H1819.14V1292.25H1820.26V1292.25H1821.38V1292.25H1822.50V1292.25H1823.62V1292.25H1824.75V1292.25H1825.87V1297.86H1826.99V1297.86H1828.11V1292.25H1829.23V1297.86H1830.35V1292.25H1831.48V1297.86H1832.60V1297.86H1833.72V1297.86H1834.84V1292.25H1835.96V1292.25H1837.08V1297.86H1838.20V1292.25H1839.33V1297.86H1840.45V1297.86H1841.57V1292.25H1842.69V1297.86H1843.81V1297.86H1844.93V1297.86H1846.05V1292.25H1847.17V1297.86H1848.30V1297.86H1849.42V1292.25H1850.54V1297.86H1851.66V1292.25H1852.78V1297.86H1853.90V1297.86H1855.03V1292.25H1856.15V1297.86H1857.27V1292.25H1858.39V1292.25H1859.51V1297.86H1860.63V1297.86H1861.75V1292.25H1862.88V1292.25H1864.00V1292.25H1865.12V1297.86H1866.24V1297.86H1867.36V1292.25H1868.48V1297.86H1869.60V1292.25H1870.73V1297.86H1871.85V1292.25H1872.97V1297.86H1874.09V1297.86H1875.21V1297.86H1876.33V1297.86H1877.45V1292.25H1878.58V1292.25H1879.70V1292.25H1880.82V1297.86H1881.94V1297.86H1883.06V1297.86H1884.18V1292.25H1885.30V1297.86H1886.42V1297.86H1887.55V1297.86H1888.67V1292.25H1889.79V1292.25H1890.91V1292.25H1892.03V1292.25H1893.15V1297.86H1894.28V1297.86H1895.40V1297.86H1896.52V1297.86H1897.64V1297.86H1898.76V1297.86H1899.88V1297.86H1901.00V1297.86H1902.12V1297.86H1903.25V1297.86H1904.37V1297.86H1905.49V1292.25H1906.61V1297.86H1907.73V1292.25H1908.85V1297.86H1909.98V1292.25H1911.10V1292.25H1912.22V1292.25H1913.34V1297.86H1914.46V1297.86H1915.58V1297.86H1916.70V1292.25H1917.83V1297.86H1918.95V1297.86H1920.07V1297.86H1921.19V1292.25H1922.31V1292.25H1923.43V1292.25H1924.55V1286.64H1925.68V1286.64H1926.80V1297.86H1927.92V1297.86H1929.04V1292.25H1930.16V1297.86H1931.28V1292.25H1932.40V1292.25H1933.53V1297.86H1934.65V1297.86H1935.77V1297.86H1936.89V1292.25H1938.01V1292.25H1939.13V1292.25H1940.25V1297.86H1941.38V1297.86H1942.50V1297.86H1943.62V1292.25H1944.74V1292.25H1945.86V1292.25H1946.98V1297.86H1948.10V1292.25H1949.23V1292.25H1950.35V1292.25H1951.47V1292.25H1952.59V1297.86H1953.71V1292.25H1954.83V1297.86H1955.95V1292.25H1957.08V1297.86H1958.20V1292.25H1959.32V1292.25H1960.44V1297.86H1961.56V1292.25H1962.68V1297.86H1963.80V1292.25H1964.93V1292.25H1966.05V1297.86H1967.17V1297.86H1968.29V1297.86H1969.41V1297.86H1970.53V1292.25H1971.65V1297.86H1972.78V1297.86H1973.90V1292.25H1975.02V1297.86H1976.14V1292.25H1977.26V1297.86H1978.38V1297.86H1979.50V1292.25H1980.62V1292.25H1981.75V1297.86H1982.87V1297.86H1983.99V1292.25H1985.11V1292.25H1986.23V1297.86H1987.35V1292.25H1988.48V1297.86H1989.60V1292.25H1990.72V1292.25H1991.84V1292.25H1992.96V1297.86H1994.08V1292.25H1995.20V1297.86H1996.33V1292.25H1997.45V1297.86H1998.57V1292.25H1999.69V1297.86H2000.81V1297.86H2001.93V1292.25H2003.05V1292.25H2004.18V1297.86H2005.30V1297.86H2006.42V1297.86H2007.54V1297.86H2008.66V1292.25H2009.78V1292.25H2010.90V1297.86H2012.03V1297.86H2013.15V1297.86H2014.27V1292.25H2015.39V1297.86H2016.51V1297.86H2017.63V1297.86H2018.75V1297.86H2019.88V1292.25H2021.00V1292.25H2022.12V1297.86H2023.24V1292.25H2024.36V1297.86H2025.48V1297.86H2026.60V1297.86H2027.73V1297.86H2028.85V1292.25H2029.97V1292.25H2031.09V1292.25H2032.21V1292.25H2033.33V1297.86H2034.45V1297.86H2035.58V1297.86H2036.70V1292.25H2037.82V1297.86H2038.94V1297.86H2040.06V1297.86H2041.18V1297.86H2042.30V1292.25H2043.43V1297.86H2044.55V1297.86H2045.67V1297.86H2046.79V1297.86H2047.91V1292.25H2049.03V1292.25H2050.15V1297.86H2051.28V1297.86H2052.40V1292.25H2053.52V1297.86H2054.64V1297.86H2055.76V1292.25H2056.88V1297.86H2058.00V1297.86H2059.12V1292.25H2060.25V1292.25H2061.37V1292.25H2062.49V1297.86H2063.61V1297.86H2064.73V1292.25H2065.85V1292.25H2066.97V1297.86H2068.10V1297.86H2069.22V1292.25H2070.34V1297.86H2071.46V1297.86H2072.58V1297.86H2073.70V1297.86H2074.82V1292.25H2075.95V1297.86H2077.07V1292.25H2078.19V1292.25H2079.31V1292.25H2080.43V1297.86H2081.55V1292.25H2082.68V1297.86H2083.80V1292.25H2084.92V1297.86H2086.04V1292.25H2087.16V1292.25H2088.28V1297.86H2089.40V1292.25H2090.53V1292.25H2091.65V1297.86H2092.77V1297.86H2093.89V1292.25H2095.01V1297.86H2096.13V1292.25H2097.25V1297.86H2098.38V1292.25H2099.50V1292.25H2100.62V1297.86H2101.74V1297.86H2102.86V1292.25H2103.98V1297.86H2105.10V1292.25H2106.23V1297.86H2107.35V1292.25H2108.47V1297.86H2109.59V1297.86H2110.71V1297.86H2111.83V1297.86H2112.95V1292.25H2114.08V1292.25H2115.20V1292.25H2116.32V1292.25H2117.44V1292.25H2118.56V1292.25H2119.68V1297.86H2120.80V1297.86H2121.93V1292.25H2123.05V1297.86H2124.17V1297.86H2125.29V1292.25H2126.41V1297.86H2127.53V1292.25H2128.65V1292.25H2129.78V1297.86H2130.90V1292.25H2132.02V1297.86H2133.14V1297.86H2134.26V1297.86H2135.38V1297.86H2136.50V1292.25H2137.63V1292.25H2138.75V1292.25H2139.87V1297.86H2140.99V1297.86H2142.11V1292.25H2143.23V1292.25H2144.35V1292.25H2145.48V1292.25H2146.60V1297.86H2147.72V1297.86H2148.84V1297.86H2149.96V1292.25H2151.08V1297.86H2152.20V1297.86H2153.33V1297.86H2154.45V1297.86H2155.57V1292.25H2156.69V1292.25H2157.81V1297.86H2158.93V1297.86H2160.05V1297.86H2161.18V1292.25H2162.30V1297.86H2163.42V1297.86H2164.54V1286.64H2165.66V1286.64H2166.78V1292.25H2167.90V1292.25H2169.03V1292.25H2170.15V1292.25H2171.27V1292.25H2172.39V1292.25H2173.51V1297.86H2174.63V1292.25H2175.75V1297.86H2176.88V1292.25H2178.00V1292.25H2179.12V1297.86H2180.24V1292.25H2181.36V1297.86H2182.48V1297.86H2183.60V1297.86H2184.73V1292.25H2185.85V1292.25H2186.97V1292.25H2188.09V1297.86H2189.21V1297.86H2190.33V1297.86H2191.45V1292.25H2192.58V1292.25H2193.70V1297.86H2194.82V1292.25H2195.94V1297.86H2197.06V1292.25H2198.18V1292.25H2199.30V1292.25H2200.43V1297.86H2201.55V1297.86H2202.67V1292.25H2203.79V1297.86H2204.91V1292.25H2206.03V1292.25H2207.15V1292.25H2208.28V1292.25H2209.40V1297.86H2210.52V1292.25H2211.64V1292.25H2212.76V1292.25H2213.88V1286.64H2215.00V1286.64H2216.13V1292.25H2217.25V1297.86H2218.37V1292.25H2219.49V1297.86H2220.61V1297.86H2221.73V1292.25H2222.85V1292.25H2223.98V1292.25H2225.10V1292.25H2226.22V1292.25H2227.34V1292.25H2228.46V1297.86H2229.58V1297.86H2230.70V1297.86H2231.83V1292.25H2232.95V1292.25H2234.07V1297.86H2235.19V1292.25H2236.31V1297.86H2237.43V1292.25H2238.55V1286.64H2239.68V1286.64H2240.80V1297.86H2241.92V1292.25H2243.04V1292.25H2244.16V1292.25H2245.28V1297.86H2246.40V1297.86H2247.53V1292.25H2248.65V1292.25H2249.77V1286.64H2250.89V1286.64H2252.01V1297.86H2253.13V1292.25H2254.25V1292.25H2255.38V1297.86H2256.50V1297.86H2257.62V1292.25H2258.74V1292.25H2259.86V1292.25H2260.98V1297.86H2262.10V1292.25H2263.23V1292.25H2264.35V1292.25H2265.47V1297.86H2266.59V1297.86H2267.71V1297.86H2268.83V1297.86H2269.95V1292.25H2271.08V1292.25H2272.20V1297.86H2273.32V1292.25H2274.44V1297.86H2275.56V1292.25H2276.68V1297.86H2277.80V1292.25H2278.93V1297.86H2280.05V1297.86H2281.17V1292.25H2282.29V1292.25H2283.41V1297.86H2284.53V1292.25H2285.65V1297.86H2286.78V1292.25H2287.90V1292.25H2289.02V1297.86H2290.14V1292.25H2291.26V1292.25H2292.38V1292.25H2293.50V1297.86H2294.63V1292.25H2295.75V1297.86H2296.87V1292.25H2297.99V1297.86H2299.11V1292.25H2300.23V1297.86H2301.35V1297.86H2302.48V1297.86H2303.60V1292.25H2304.72V1297.86H2305.84V1292.25H2306.96V1297.86H2308.08V1292.25H2309.20V1297.86H2310.33V1297.86H2311.45V1292.25H2312.57V1297.86H2313.69V1297.86H2314.81V1297.86H2315.93V1292.25H2317.05V1297.86H2318.18V1292.25H2319.30V1292.25H2320.42V1292.25H2321.54V1292.25H2322.66V1297.86H2323.78V1292.25H2324.90V1292.25H2326.03V1297.86H2327.15V1292.25H2328.27V1292.25H2329.39V1297.86H2330.51V1297.86H2331.63V1297.86H2332.75V1297.86H2333.88V1292.25H2335.00V1297.86H2336.12V1297.86H2337.24V1292.25H2338.36V1292.25H2339.48V1292.25H2340.60V1297.86H2341.73V1292.25H2342.85V1292.25H2343.97V1292.25H2345.09V1292.25H2346.21V1297.86H2347.33V1297.86H2348.45V1292.25H2349.58V1297.86H2350.70V1297.86H2351.82V1292.25H2352.94V1297.86H2354.06V1297.86H2355.18V1292.25H2356.30V1292.25H2357.43V1297.86H2358.55V1297.86H2359.67V1286.64H2360.79V1286.64H2361.91V1286.64H2363.03V1286.64H2364.15V1286.64H2365.28V1286.64H2366.40V1286.64H2367.52V1286.64H2368.64V1297.86H2369.76V1297.86H2370.88V1281.03H2372.00V1281.03H2373.12V1292.25H2374.25V1297.86H2375.37V1286.64H2376.49V1286.64H2377.61V1292.25H2378.73V1292.25H2379.85V1297.86H2380.98V1292.25H2382.10V1297.86H2383.22V1292.25H2384.34V1292.25H2385.46V1297.86H2386.58V1292.25H2387.70V1292.25H2388.83V1297.86H2389.95V1297.86H2391.07V1297.86H2392.19V1297.86H2393.31V1297.86H2394.43V1297.86H2395.55V1297.86H2396.68V1292.25H2397.80V1297.86H2398.92V1292.25H2400.04V1297.86H2401.16V1292.25H2402.28V1297.86H2403.40V1297.86H2404.53V1297.86H2405.65V1292.25H2406.77V1297.86H2407.89V1292.25H2409.01V1297.86H2410.13V1292.25H2411.25V1292.25H2412.38V1297.86H2413.50V1292.25H2414.62V1297.86H2415.74V1320.30Z" fill="#a0ecc4"/><path d="M235.68 1320.30V1292.25H236.80V1269.81H237.92V1269.81H239.05V1292.25H240.17V1292.25H241.29V1292.25H242.41V1297.86H243.53V1292.25H244.65V1297.86H245.78V1297.86H246.90V1286.64H248.02V1286.64H249.14V1297.86H250.26V1292.25H251.38V1264.20H252.50V1264.20H253.62V1297.86H254.75V1292.25H255.87V1292.25H256.99V1292.25H258.11V1292.25H259.23V1292.25H260.35V1292.25H261.48V1292.25H262.60V1292.25H263.72V1275.42H264.84V1275.42H265.96V1297.86H267.08V1292.25H268.20V1292.25H269.33V1292.25H270.45V1292.25H271.57V1292.25H272.69V1292.25H273.81V1297.86H274.93V1292.25H276.05V1292.25H277.18V1292.25H278.30V1275.42H279.42V1275.42H280.54V1292.25H281.66V1292.25H282.78V1292.25H283.90V1297.86H285.03V1286.64H286.15V1286.64H287.27V1292.25H288.39V1292.25H289.51V1292.25H290.63V1292.25H291.75V1297.86H292.88V1292.25H294.00V1297.86H295.12V1297.86H296.24V1292.25H297.36V1297.86H298.48V1281.03H299.60V1281.03H300.73V1297.86H301.85V1297.86H302.97V1297.86H304.09V1292.25H305.21V1286.64H306.33V1286.64H307.45V1292.25H308.58V1297.86H309.70V1292.25H310.82V1292.25H311.94V1292.25H313.06V1297.86H314.18V1292.25H315.30V1292.25H316.43V1292.25H317.55V1292.25H318.67V1286.64H319.79V1286.64H320.91V1292.25H322.03V1292.25H323.15V1292.25H324.28V1297.86H325.40V1297.86H326.52V1292.25H327.64V1292.25H328.76V1297.86H329.88V1292.25H331.00V1297.86H332.12V1292.25H333.25V1292.25H334.37V1292.25H335.49V1292.25H336.61V1292.25H337.73V1292.25H338.85V1297.86H339.98V1292.25H341.10V1292.25H342.22V1292.25H343.34V1286.64H344.46V1286.64H345.58V1292.25H346.70V1292.25H347.83V1292.25H348.95V1292.25H350.07V1292.25H351.19V1292.25H352.31V1292.25H353.43V1292.25H354.55V1292.25H355.68V1297.86H356.80V1297.86H357.92V1292.25H359.04V1292.25H360.16V1292.25H361.28V1292.25H362.40V1292.25H363.53V1292.25H364.65V1292.25H365.77V1292.25H366.89V1292.25H368.01V1292.25H369.13V1292.25H370.25V1292.25H371.38V1292.25H372.50V1292.25H373.62V1292.25H374.74V1292.25H375.86V1292.25H376.98V1292.25H378.10V1286.64H379.23V1286.64H380.35V1292.25H381.47V1292.25H382.59V1292.25H383.71V1320.30ZM558.65 1320.30V1292.25H559.78V1292.25H560.90V1292.25H562.02V1292.25H563.14V1292.25H564.26V1292.25H565.38V1292.25H566.50V1269.81H567.62V1292.25H568.75V1292.25H569.87V1286.64H570.99V1286.64H572.11V1286.64H573.23V1292.25H574.35V1208.10H575.48V1247.37H576.60V1180.05H577.72V1174.44H578.84V1174.44H579.96V1219.32H581.08V1230.54H582.20V1230.54H583.33V1241.76H584.45V1241.76H585.57V1230.54H586.69V1230.54H587.81V1224.93H588.93V1123.95H590.05V1051.02H591.18V1006.14H592.30V1140.78H593.42V1180.05H594.54V972.48H595.66V927.60H596.78V1067.85H597.90V950.04H599.03V1157.61H600.15V1168.83H601.27V1202.49H602.39V1219.32H603.51V1219.32H604.63V1219.32H605.75V1230.54H606.88V1230.54H608.00V1230.54H609.12V1230.54H610.24V1241.76H611.36V1163.22H612.48V1163.22H613.60V1118.34H614.73V1107.12H615.85V1101.51H616.97V1168.83H618.09V1168.83H619.21V1236.15H620.33V1224.93H621.45V1224.93H622.58V1224.93H623.70V1236.15H624.82V1236.15H625.94V1230.54H627.06V1230.54H628.18V1034.19H629.30V1185.66H630.43V1185.66H631.55V1185.66H632.67V1118.34H633.79V1056.63H634.91V1157.61H636.03V1157.61H637.15V1224.93H638.28V1224.93H639.40V1241.76H640.52V1241.76H641.64V1236.15H642.76V1241.76H643.88V1241.76H645.00V1241.76H646.12V1241.76H647.25V1241.76H648.37V1258.59H649.49V1258.59H650.61V1258.59H651.73V1281.03H652.85V1281.03H653.98V1236.15H655.10V1084.68H656.22V983.70H657.34V1135.17H658.46V1123.95H659.58V1185.66H660.70V1185.66H661.83V1241.76H662.95V1230.54H664.07V1152.00H665.19V1152.00H666.31V1152.00H667.43V1152.00H668.55V1202.49H669.68V1230.54H670.80V1230.54H671.92V1129.56H673.04V1095.90H674.16V994.92H675.28V1034.19H676.40V1095.90H677.53V1208.10H678.65V1185.66H679.77V1185.66H680.89V1180.05H682.01V1191.27H683.13V1191.27H684.25V1224.93H685.38V1224.93H686.50V1236.15H687.62V1236.15H688.74V1219.32H689.86V1157.61H690.98V1140.78H692.10V1140.78H693.23V1028.58H694.35V1118.34H695.47V916.38H696.59V1118.34H697.71V1129.56H698.83V1152.00H699.95V1152.00H701.08V1180.05H702.20V1152.00H703.32V1152.00H704.44V1202.49H705.56V1202.49H706.68V1320.30ZM881.62 1320.30V1292.25H882.75V1292.25H883.87V1292.25H884.99V1292.25H886.11V1292.25H887.23V1275.42H888.35V1275.42H889.48V1292.25H890.60V1292.25H891.72V1292.25H892.84V1292.25H893.96V1286.64H895.08V1286.64H896.20V1292.25H897.33V1292.25H898.45V1208.10H899.57V1208.10H900.69V1224.93H901.81V1224.93H902.93V1236.15H904.05V1236.15H905.18V1236.15H906.30V1230.54H907.42V1247.37H908.54V1247.37H909.66V1185.66H910.78V910.77H911.90V1034.19H913.03V1118.34H914.15V1213.71H915.27V1213.71H916.39V1247.37H917.51V1230.54H918.63V1230.54H919.75V1241.76H920.88V1241.76H922.00V1236.15H923.12V1236.15H924.24V1247.37H925.36V1258.59H926.48V1258.59H927.60V1269.81H928.73V1269.81H929.85V1107.12H930.97V1011.75H932.09V1107.12H933.21V1219.32H934.33V1224.93H935.45V1224.93H936.58V1180.05H937.70V1129.56H938.82V1129.56H939.94V1129.56H941.06V1224.93H942.18V1224.93H943.30V1219.32H944.43V1219.32H945.55V1236.15H946.67V1236.15H947.79V1236.15H948.91V1236.15H950.03V1236.15H951.15V1208.10H952.28V1224.93H953.40V1224.93H954.52V1241.76H955.64V1241.76H956.76V1230.54H957.88V1230.54H959.00V1219.32H960.12V1236.15H961.25V1236.15H962.37V1236.15H963.49V1213.71H964.61V1213.71H965.73V1236.15H966.85V1230.54H967.98V1230.54H969.10V1236.15H970.22V1236.15H971.34V1264.20H972.46V1264.20H973.58V1258.59H974.70V1258.59H975.83V1241.76H976.95V1241.76H978.07V983.70H979.19V1067.85H980.31V1095.90H981.43V1123.95H982.55V1152.00H983.68V1152.00H984.80V1163.22H985.92V1163.22H987.04V1191.27H988.16V1095.90H989.28V877.11H990.40V1022.97H991.53V1230.54H992.65V1230.54H993.77V1258.59H994.89V1208.10H996.01V1157.61H997.13V1157.61H998.25V1213.71H999.38V1129.56H1000.50V1135.17H1001.62V1135.17H1002.74V1196.88H1003.86V1213.71H1004.98V1213.71H1006.10V1224.93H1007.23V1191.27H1008.35V1191.27H1009.47V978.09H1010.59V1034.19H1011.71V1129.56H1012.83V1129.56H1013.95V961.26H1015.08V1067.85H1016.20V1129.56H1017.32V1146.39H1018.44V1146.39H1019.56V1146.39H1020.68V1208.10H1021.80V1208.10H1022.93V1208.10H1024.05V1174.44H1025.17V1230.54H1026.29V1230.54H1027.41V1230.54H1028.53V1230.54H1029.65V1320.30ZM1204.60 1320.30V1297.86H1205.72V1297.86H1206.84V1286.64H1207.96V1286.64H1209.08V1292.25H1210.20V1292.25H1211.33V1292.25H1212.45V1292.25H1213.57V1292.25H1214.69V1292.25H1215.81V1292.25H1216.93V1281.03H1218.05V1275.42H1219.18V1219.32H1220.30V1219.32H1221.42V1258.59H1222.54V1208.10H1223.66V1191.27H1224.78V1191.27H1225.90V1112.73H1227.03V1152.00H1228.15V1230.54H1229.27V1230.54H1230.39V1230.54H1231.51V1230.54H1232.63V1051.02H1233.75V1051.02H1234.88V1000.53H1236.00V1107.12H1237.12V1202.49H1238.24V1202.49H1239.36V1129.56H1240.48V1062.24H1241.60V1241.76H1242.73V1241.76H1243.85V1230.54H1244.97V1230.54H1246.09V1230.54H1247.21V1191.27H1248.33V1112.73H1249.45V1185.66H1250.58V1185.66H1251.70V1152.00H1252.82V1073.46H1253.94V1123.95H1255.06V1123.95H1256.18V1022.97H1257.30V1152.00H1258.43V1152.00H1259.55V1157.61H1260.67V1213.71H1261.79V1213.71H1262.91V1236.15H1264.03V1236.15H1265.15V1219.32H1266.28V1219.32H1267.40V1219.32H1268.52V1219.32H1269.64V1219.32H1270.76V1174.44H1271.88V1174.44H1273.00V1129.56H1274.13V1174.44H1275.25V1224.93H1276.37V1224.93H1277.49V1123.95H1278.61V1090.29H1279.73V1112.73H1280.85V1123.95H1281.98V1118.34H1283.10V1230.54H1284.22V1230.54H1285.34V1230.54H1286.46V1230.54H1287.58V1230.54H1288.70V1241.76H1289.83V1241.76H1290.95V1241.76H1292.07V1230.54H1293.19V1230.54H1294.31V1230.54H1295.43V1247.37H1296.55V1247.37H1297.68V1219.32H1298.80V1219.32H1299.92V1185.66H1301.04V1056.63H1302.16V1152.00H1303.28V1185.66H1304.40V1185.66H1305.53V983.70H1306.65V1185.66H1307.77V1224.93H1308.89V1224.93H1310.01V1230.54H1311.13V1230.54H1312.25V1152.00H1313.38V955.65H1314.50V1191.27H1315.62V1191.27H1316.74V1129.56H1317.86V1241.76H1318.98V1241.76H1320.10V1180.05H1321.23V1152.00H1322.35V933.21H1323.47V978.09H1324.59V1180.05H1325.71V1241.76H1326.83V1241.76H1327.95V1241.76H1329.08V1236.15H1330.20V1236.15H1331.32V1123.95H1332.44V865.89H1333.56V1000.53H1334.68V972.48H1335.80V1112.73H1336.93V1123.95H1338.05V1022.97H1339.17V1152.00H1340.29V1208.10H1341.41V1208.10H1342.53V1191.27H1343.65V1191.27H1344.78V1191.27H1345.90V1191.27H1347.02V1135.17H1348.14V1135.17H1349.26V1236.15H1350.38V1236.15H1351.50V1236.15H1352.63V1320.30ZM1527.57 1320.30V1292.25H1528.69V1292.25H1529.81V1292.25H1530.93V1292.25H1532.05V1292.25H1533.18V1292.25H1534.30V1292.25H1535.42V1292.25H1536.54V1292.25H1537.66V1292.25H1538.78V1286.64H1539.90V1286.64H1541.03V1286.64H1542.15V1292.25H1543.27V1292.25H1544.39V1202.49H1545.51V1202.49H1546.63V1230.54H1547.75V1230.54H1548.88V1236.15H1550.00V1236.15H1551.12V1152.00H1552.24V1101.51H1553.36V983.70H1554.48V1140.78H1555.60V1140.78H1556.73V1157.61H1557.85V1157.61H1558.97V1219.32H1560.09V1219.32H1561.21V1174.44H1562.33V1174.44H1563.45V1168.83H1564.58V1168.83H1565.70V1196.88H1566.82V1224.93H1567.94V1224.93H1569.06V1224.93H1570.18V1219.32H1571.30V1219.32H1572.43V1230.54H1573.55V1230.54H1574.67V1241.76H1575.79V1252.98H1576.91V1252.98H1578.03V1241.76H1579.15V1264.20H1580.28V1264.20H1581.40V1264.20H1582.52V1264.20H1583.64V1230.54H1584.76V1123.95H1585.88V944.43H1587.00V1107.12H1588.12V1118.34H1589.25V1152.00H1590.37V1191.27H1591.49V1202.49H1592.61V1202.49H1593.73V1185.66H1594.85V1185.66H1595.98V1152.00H1597.10V1152.00H1598.22V1123.95H1599.34V1045.41H1600.46V1101.51H1601.58V1191.27H1602.70V1208.10H1603.83V1208.10H1604.95V1208.10H1606.07V1224.93H1607.19V1224.93H1608.31V1224.93H1609.43V1224.93H1610.55V1224.93H1611.68V1224.93H1612.80V1236.15H1613.92V1236.15H1615.04V1241.76H1616.16V1241.76H1617.28V1241.76H1618.40V1224.93H1619.53V1252.98H1620.65V1252.98H1621.77V1196.88H1622.89V1123.95H1624.01V978.09H1625.13V1123.95H1626.25V1123.95H1627.38V1011.75H1628.50V1129.56H1629.62V1236.15H1630.74V1241.76H1631.86V1241.76H1632.98V1230.54H1634.10V1230.54H1635.23V1241.76H1636.35V1241.76H1637.47V1123.95H1638.59V983.70H1639.71V1090.29H1640.83V1140.78H1641.95V1140.78H1643.08V1163.22H1644.20V1163.22H1645.32V1213.71H1646.44V1213.71H1647.56V1196.88H1648.68V1196.88H1649.80V1157.61H1650.93V1157.61H1652.05V1213.71H1653.17V1213.71H1654.29V1236.15H1655.41V1236.15H1656.53V1236.15H1657.65V1269.81H1658.78V1275.42H1659.90V1275.42H1661.02V1281.03H1662.14V1281.03H1663.26V1292.25H1664.38V1292.25H1665.50V1286.64H1666.62V1286.64H1667.75V1292.25H1668.87V1292.25H1669.99V1286.64H1671.11V1286.64H1672.23V1292.25H1673.35V1292.25H1674.48V1292.25H1675.60V1320.30Z" fill="#249072"/><line x1="155.10" y1="815.40" x2="155.10" y2="1321.30" stroke="#777" stroke-width="2"/><line x1="155.50" y1="1321.80" x2="2416.30" y2="1321.80" stroke="#747474" stroke-width="1.4"/><path d="M144 1320.60H154.50M144 1264.50H154.50M144 1208.40H154.50M144 1152.30H154.50M144 1096.20H154.50M144 1040.10H154.50M144 984.00H154.50M144 927.90H154.50M144 871.80H154.50M144 815.70H154.50" stroke="#999" stroke-width="1.1" fill="none"/><path d="M155.80 1322.50V1332.5M478.77 1322.50V1332.5M801.74 1322.50V1332.5M1124.71 1322.50V1332.5M1447.69 1322.50V1332.5M1770.66 1322.50V1332.5M2093.63 1322.50V1332.5" stroke="#c4c4c4" stroke-width="1.6" fill="none"/><text x="133.3" y="1327.10" text-anchor="end" font-size="19" fill="#333" textLength="12.0" lengthAdjust="spacingAndGlyphs">0</text><text x="133.3" y="1271.00" text-anchor="end" font-size="19" fill="#333" textLength="25.6" lengthAdjust="spacingAndGlyphs">10</text><text x="133.3" y="1214.90" text-anchor="end" font-size="19" fill="#333" textLength="25.6" lengthAdjust="spacingAndGlyphs">20</text><text x="133.3" y="1158.80" text-anchor="end" font-size="19" fill="#333" textLength="25.6" lengthAdjust="spacingAndGlyphs">30</text><text x="133.3" y="1102.70" text-anchor="end" font-size="19" fill="#333" textLength="25.6" lengthAdjust="spacingAndGlyphs">40</text><text x="133.3" y="1046.60" text-anchor="end" font-size="19" fill="#333" textLength="25.6" lengthAdjust="spacingAndGlyphs">50</text><text x="133.3" y="990.50" text-anchor="end" font-size="19" fill="#333" textLength="25.6" lengthAdjust="spacingAndGlyphs">60</text><text x="133.3" y="934.40" text-anchor="end" font-size="19" fill="#333" textLength="25.6" lengthAdjust="spacingAndGlyphs">70</text><text x="133.3" y="878.30" text-anchor="end" font-size="19" fill="#333" textLength="25.6" lengthAdjust="spacingAndGlyphs">80</text><text x="133.3" y="822.20" text-anchor="end" font-size="19" fill="#333" textLength="25.6" lengthAdjust="spacingAndGlyphs">90</text><text x="121.70" y="1356.8" font-size="21" fill="#111" textLength="68.80" lengthAdjust="spacingAndGlyphs">lun. 06</text><text x="441.10" y="1356.8" font-size="21" fill="#111" textLength="75.10" lengthAdjust="spacingAndGlyphs">mar. 07</text><text x="764.40" y="1356.8" font-size="21" fill="#111" textLength="75.10" lengthAdjust="spacingAndGlyphs">mer. 08</text><text x="1088.30" y="1356.8" font-size="21" fill="#111" textLength="71.50" lengthAdjust="spacingAndGlyphs">jeu. 09</text><text x="1409.80" y="1356.8" font-size="21" fill="#111" textLength="75.10" lengthAdjust="spacingAndGlyphs">ven. 10</text><text x="1729.30" y="1356.8" font-size="21" fill="#111" textLength="80.60" lengthAdjust="spacingAndGlyphs">sam. 11</text><text x="2054.50" y="1356.8" font-size="21" fill="#111" textLength="76.90" lengthAdjust="spacingAndGlyphs">dim. 12</text><text transform="translate(87.2 1068) rotate(-90)" text-anchor="middle" font-size="23.5" fill="#333" textLength="31" lengthAdjust="spacingAndGlyphs">kW</text><rect x="2405" y="66" width="8" height="31" fill="url(#shR)"/><rect x="1990" y="47" width="415" height="49" rx="4" fill="#fff"/><text x="2112.00" y="89.20" font-size="25" textLength="172.00" lengthAdjust="spacingAndGlyphs" fill="#000" font-weight="bold">LHB-site-L606</text><rect x="1992.35" y="108.75" width="411.40" height="56.50" rx="9" fill="#fff" stroke="#808080" stroke-width="3.5"/><text x="2052.70" y="148.50" font-size="28" textLength="310.70" lengthAdjust="spacingAndGlyphs" fill="#000" >Consommation: 105 kWh</text><rect x="1992.35" y="178.75" width="411.40" height="56.50" rx="9" fill="#fff" stroke="#808080" stroke-width="3.5"/><text x="2121.60" y="218.00" font-size="28" textLength="173.00" lengthAdjust="spacingAndGlyphs" fill="#000" >P Max :  7 kW</text><rect x="1992.35" y="248.75" width="411.40" height="56.30" rx="9" fill="#fff" stroke="#808080" stroke-width="3.5"/><text x="2128.00" y="288.00" font-size="28" textLength="160.00" lengthAdjust="spacingAndGlyphs" fill="#000" >P min : 4 kW</text><rect x="562.75" y="806.75" width="410.60" height="56.80" rx="9" fill="#fff" stroke="#808080" stroke-width="3.5"/><text x="610.70" y="846.40" font-size="28" textLength="334.60" lengthAdjust="spacingAndGlyphs" fill="#000" >Consommation: 1 533 kWh</text><rect x="1100.75" y="806.75" width="410.60" height="56.80" rx="9" fill="#fff" stroke="#808080" stroke-width="3.5"/><text x="1222.40" y="846.40" font-size="28" textLength="187.20" lengthAdjust="spacingAndGlyphs" fill="#000" >P Max :  81 kW</text><rect x="1610.75" y="806.75" width="410.60" height="56.80" rx="9" fill="#fff" stroke="#808080" stroke-width="3.5"/><text x="1747.40" y="846.40" font-size="28" textLength="158.30" lengthAdjust="spacingAndGlyphs" fill="#000" >P min : 4 kW</text><rect x="1048.3" y="542.3" width="521.4" height="69.8" rx="9" fill="#fff" fill-opacity="0.92"/><text x="1138.2" y="589.1" font-size="31" font-weight="bold" fill="#111" textLength="352.3" lengthAdjust="spacingAndGlyphs">dimanche 12 avril 2026</text><rect x="176.5" y="49.2" width="481.5" height="77.3" fill="#0a0a18"/><clipPath id="ecoClip"><path d="M180 60H280V94C262 88 246 88 230 93C214 98 198 101 180 100Z"/></clipPath><path d="M191.6 91.3H210.6A9.6 12 0 1 0 208.3 103M198.2 73.6L204.8 70.9M238.2 87.6A10.6 10.6 0 1 0 238.2 101.6M267.3 94.8A10.2 10.2 0 1 0 246.9 94.8A10.2 10.2 0 1 0 267.3 94.8" fill="none" stroke="#00bf9f" stroke-width="7" stroke-linecap="round"/><path d="M191.6 91.3H210.6A9.6 12 0 1 0 208.3 103M198.2 73.6L204.8 70.9M238.2 87.6A10.6 10.6 0 1 0 238.2 101.6M267.3 94.8A10.2 10.2 0 1 0 246.9 94.8A10.2 10.2 0 1 0 267.3 94.8" fill="none" stroke="#00f0c8" stroke-width="7" stroke-linecap="round" clip-path="url(#ecoClip)"/><path d="M275.5 84L283.2 107.6L291.2 83.5L299 107.6L313.6 68.2M315.3 86Q324 78.5 334.8 87.5V108.2M334.6 101A9.3 7.6 0 1 0 334.6 101.2M346.2 73.5V103.5Q346.2 108.2 352.5 108.2M341 81.8H355.3M362.2 73.5V103.5Q362.2 108.2 368.5 108.2M357 81.8H372.8" fill="none" stroke="#fff" stroke-width="7" stroke-linecap="round" stroke-linejoin="round"/><ellipse cx="433.8" cy="88.8" rx="26" ry="28" fill="#00b4e0"/><path d="M420.4 96.6V80.3H425.2A4.5 4.5 0 0 1 425.2 89.4H420.4M425.2 89.4L430.4 96.6M420.4 89.5H450.2M435.7 84.2V94.6Q435.7 96.4 437.8 96.4M449.9 89.5A5.5 5.5 0 1 0 444.4 95H450.6" fill="none" stroke="#fff" stroke-width="2.3"/><g fill="#0aa8d8" stroke="#0aa8d8" stroke-width="0.35" font-size="10.5"><text x="468" y="78.8" textLength="48" lengthAdjust="spacingAndGlyphs">Le réseau</text><text x="468" y="91.4" textLength="61" lengthAdjust="spacingAndGlyphs">de transport</text><text x="468" y="104.5" textLength="57" lengthAdjust="spacingAndGlyphs">d’électricité</text></g><rect x="546.2" y="61.4" width="100.8" height="55.9" fill="#fff"/><rect x="553.2" y="68.6" width="7.4" height="6.8" fill="#2a3a8c"/><path d="M564 68.6H571.8V75.4H563.8L565.5 72Z" fill="#e01b24"/><g fill="#333" font-weight="bold" font-size="7.5"><text x="553" y="85" textLength="44" lengthAdjust="spacingAndGlyphs">RÉPUBLIQUE</text><text x="553" y="93" textLength="41" lengthAdjust="spacingAndGlyphs">FRANÇAISE</text></g><g fill="#555" font-size="4" font-style="italic"><text x="553" y="100">Liberté</text><text x="553" y="105">Égalité</text><text x="553" y="110">Fraternité</text></g><rect x="607.4" y="66.7" width="34.4" height="45" fill="#fff" stroke="#6a98d0" stroke-width="1.4"/><text x="624.3" y="74.6" text-anchor="middle" font-size="6" font-weight="bold" fill="#e83030" textLength="25" lengthAdjust="spacing">ADEME</text><ellipse cx="624.3" cy="87.1" rx="8.6" ry="9" fill="#1a4aa8"/><path d="M617 84 q3 -1 4 3 q1 4 3 7 M624.5 80.5 q2 2 1 5 M627 90 q1 3 -1 5" stroke="#9aa8e0" stroke-width="2" fill="none"/><g fill="#f08080"><rect x="611.8" y="99.4" width="25" height="1.9"/><rect x="611.8" y="102.9" width="25" height="1.9"/><rect x="611.8" y="106.5" width="25" height="1.9"/></g><rect x="169.3" y="135.4" width="491.4" height="123.2" fill="none"/><path d="M169.3 135.4H660.7V258.6H169.3Z M172.3 138.5H655.6V255.6H172.3Z" fill="#d9d9d9" fill-rule="evenodd"/><rect x="172.3" y="189.2" width="483.3" height="4.7" fill="#d9d9d9"/><rect x="288.9" y="138.5" width="5.2" height="117.1" fill="#d9d9d9"/><rect x="411.7" y="138.5" width="5.2" height="117.1" fill="#d9d9d9"/><rect x="533.4" y="138.5" width="5.2" height="117.1" fill="#d9d9d9"/><g transform="translate(180.20 195.00) scale(0.9972 0.9964)"><rect width="106" height="55" fill="url(#eg)"/><path d="M15.5 0 C30 10 48 24 71 24 C86 24 98 19 106 16 V0 Z" fill="#00f0c8"/><path d="M29.4 0 C42 7 56 11 71 11 C86 11 98 7 106 3.8 V0 Z" fill="#00a68c"/></g><g transform="translate(301.90 196.20) scale(1.0009 1.0109)"><rect width="106" height="55" fill="url(#eg)"/><path d="M15.5 0 C30 10 48 24 71 24 C86 24 98 19 106 16 V0 Z" fill="#00f0c8"/><path d="M29.4 0 C42 7 56 11 71 11 C86 11 98 7 106 3.8 V0 Z" fill="#00a68c"/></g><g transform="translate(424.20 196.20) scale(1.0009 1.0109)"><rect width="106" height="55" fill="url(#eg)"/><path d="M15.5 0 C30 10 48 24 71 24 C86 24 98 19 106 16 V0 Z" fill="#00f0c8"/><path d="M29.4 0 C42 7 56 11 71 11 C86 11 98 7 106 3.8 V0 Z" fill="#00a68c"/></g><g transform="translate(544.30 196.20) scale(0.9962 1.0109)"><rect width="106" height="55" fill="url(#eg)"/><path d="M15.5 0 C30 10 48 24 71 24 C86 24 98 19 106 16 V0 Z" fill="#00f0c8"/><path d="M29.4 0 C42 7 56 11 71 11 C86 11 98 7 106 3.8 V0 Z" fill="#00a68c"/></g><path d="M237.6 152.6V169L234.0 173.3H228.7L225.3 168.8M327.1 152.6V169L323.5 173.3H318.2L314.8 168.8M448.9 152.6V169L445.3 173.3H440.0L436.6 168.8M571.1 152.6V169L567.5 173.3H562.2L558.8 168.8" fill="none" stroke="#000" stroke-width="4" stroke-linecap="round" stroke-linejoin="round"/><path d="M353.8 156V171.8M347.2 163.9H360.6M476 156V171.8M469.4 163.9H482.2M598 156V171.8M591.5 163.9H604.3M387.8 152.2V173.4M387.4 152.6L381.8 157.8" fill="none" stroke="#111" stroke-width="2.7" stroke-linecap="round" stroke-linejoin="round"/><path d="M502.7 155.3L504.8 152.8H510.6L513 155.2V160.6L502.8 171V173H515.6" fill="none" stroke="#000" stroke-width="4.3" stroke-linecap="round" stroke-linejoin="round"/><path d="M624.6 155L627.8 152.8H631.8L634.8 155.2V159.9L632.2 162.9H630.2M632.2 162.9L637.2 167.9V170.3L633.4 173.4H627.8L624.6 170.7" fill="none" stroke="#000" stroke-width="4" stroke-linecap="round" stroke-linejoin="round"/><rect x="2322.6" y="1322.3" width="115.1" height="57.9" fill="#fff"/><path d="M2360.3 1342.4 A12.4 12.4 0 1 0 2361.8 1350.9 H2350.5" fill="none" stroke="#0a6fba" stroke-width="4.9" stroke-linecap="round"/><path d="M2370.4 1351.3 A6.9 6.9 0 1 1 2382.4 1349.6 L2370.6 1361.2 H2385.6" fill="none" stroke="#0a6fba" stroke-width="4.8" stroke-linecap="round" stroke-linejoin="round"/><path d="M2392.2 1324.6 L2383.5 1338.2 L2392.6 1338.4 L2389 1362.6 L2399.8 1338.7 L2392.2 1335.7 Z" fill="#e8582a"/><g fill="#f0931e"><path d="M2404 1339.3H2424.6L2418.9 1344.6H2401Z"/><path d="M2399.5 1348.2H2418.3L2412.6 1353.9H2396.8Z"/><path d="M2396.8 1357.2H2416.8L2411.1 1363.2H2392.9Z"/></g><text x="2393.5" y="1334.6" font-size="7.6" font-weight="bold" fill="#e8662e" textLength="30.2" lengthAdjust="spacingAndGlyphs">FRANCE</text><rect x="2339.4" y="1365.6" width="74.7" height="2" fill="#5a9ad8" fill-opacity="0.45"/></svg></body></html>
